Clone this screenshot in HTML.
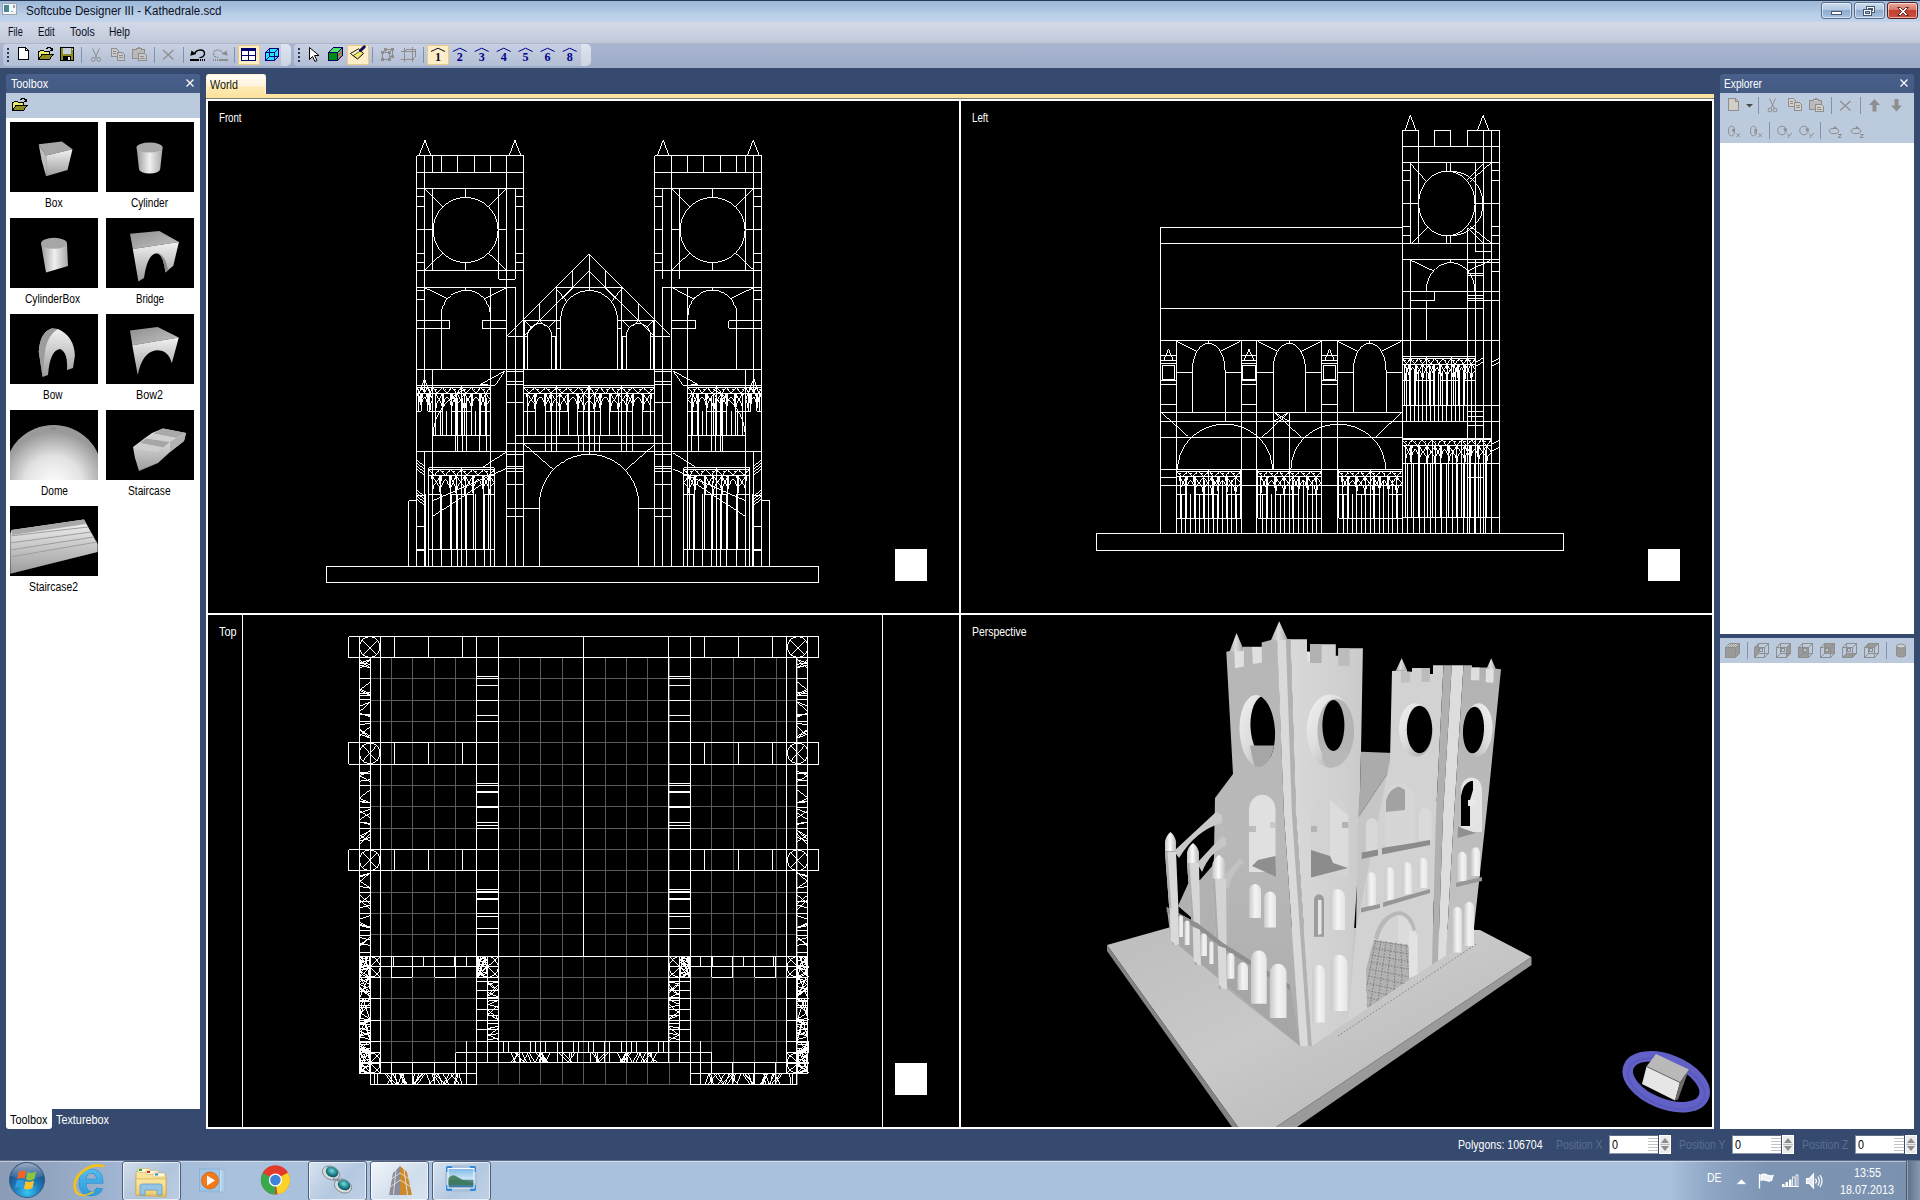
<!DOCTYPE html>
<html><head><meta charset="utf-8"><title>Softcube Designer III</title>
<style>
*{box-sizing:border-box;margin:0;padding:0}
html,body{width:1920px;height:1200px;overflow:hidden;background:#354a6e;font-family:"Liberation Sans",sans-serif;font-size:12px;color:#000}
.abs{position:absolute}
svg{position:absolute;overflow:visible}
.t{position:absolute;white-space:nowrap;line-height:14px;letter-spacing:-0.45px}
</style></head>
<body>
<div class="abs" style="left:0px;top:0px;width:1920px;height:22px;background:linear-gradient(#263752 0,#263752 1px,#9db8d8 1px,#a9c2df 8px,#b9cee7 14px,#c2d4ea 22px)"></div>
<div class="abs" style="left:0px;top:22px;width:1920px;height:21px;background:linear-gradient(#d3d9e7,#c9d0df 60%,#c0c8d8)"></div>
<div class="abs" style="left:0px;top:43px;width:1920px;height:25px;background:linear-gradient(#aab6d0,#9dabc7)"></div>
<div class="t" style="left:26px;top:4px;letter-spacing:0;font-size:12px;line-height:14px;transform-origin:0 0;transform:scaleX(0.9641);color:#0a0f1e">Softcube Designer III - Kathedrale.scd</div>
<div class="t" style="left:7.5px;top:25px;letter-spacing:0;font-size:12px;line-height:14px;transform-origin:0 0;transform:scaleX(0.7602);color:#0a0f1e">File</div>
<div class="t" style="left:37.5px;top:25px;letter-spacing:0;font-size:12px;line-height:14px;transform-origin:0 0;transform:scaleX(0.8076);color:#0a0f1e">Edit</div>
<div class="t" style="left:69.5px;top:25px;letter-spacing:0;font-size:12px;line-height:14px;transform-origin:0 0;transform:scaleX(0.8817);color:#0a0f1e">Tools</div>
<div class="t" style="left:109.2px;top:25px;letter-spacing:0;font-size:12px;line-height:14px;transform-origin:0 0;transform:scaleX(0.8509);color:#0a0f1e">Help</div>
<div class="abs" style="left:1821px;top:2px;width:31px;height:17px;background:linear-gradient(#c9dbee 0,#b3c9e2 45%,#8fabcc 50%,#a9c3df 100%);border:1px solid #566d8e;border-radius:3px;box-shadow:inset 0 0 0 1px rgba(255,255,255,.55)"></div>
<div class="abs" style="left:1854px;top:2px;width:31px;height:17px;background:linear-gradient(#c9dbee 0,#b3c9e2 45%,#8fabcc 50%,#a9c3df 100%);border:1px solid #566d8e;border-radius:3px;box-shadow:inset 0 0 0 1px rgba(255,255,255,.55)"></div>
<div class="abs" style="left:1887px;top:2px;width:31px;height:17px;background:linear-gradient(#e8a99a 0,#d9776a 45%,#c3402f 50%,#c8523d 100%);border:1px solid #5a1f1a;border-radius:3px;box-shadow:inset 0 0 0 1px rgba(255,255,255,.55)"></div>
<svg style="left:1821px;top:2px" width="100" height="17" viewBox="0 0 100 17">
<rect x="10.5" y="9.5" width="10" height="3" fill="#fff" stroke="#45566f" stroke-width="1"/>
<g fill="none" stroke="#45566f" stroke-width="1"><rect x="45.5" y="4.500" width="8" height="6" fill="#fff"/><rect x="47.5" y="6.5" width="4" height="2" fill="#9db6d3"/>
<rect x="42.500" y="7.500" width="8" height="6" fill="#fff"/><rect x="44.5" y="9.5" width="4" height="2" fill="#9db6d3"/></g>
<path d="M76.5 5.500 l3 0 l2.500 2.600 l2.500 -2.600 l3 0 l-4 4 l4 4 l-3 0 l-2.500 -2.600 l-2.500 2.600 l-3 0 l4 -4 z" fill="#fff" stroke="#5a2a25" stroke-width="1"/>
</svg>
<svg style="left:2px;top:3px" width="16" height="13" viewBox="0 0 16 13"><rect x="0.5" y="0.5" width="14" height="11" fill="#f4f6f8" stroke="#9aa4ad"/><rect x="2" y="2" width="5" height="7" fill="#3f8f86"/><rect x="2" y="2" width="2" height="7" fill="#4a7fa8"/><rect x="11.500" y="2" width="1" height="3" fill="#34506b"/><rect x="9" y="8" width="2" height="1" fill="#9aa"/></svg>
<div class="abs" style="left:3px;top:44px;width:288px;height:22px;background:linear-gradient(#c9d1e3,#bac5da 60%,#b3bfd6);border-radius:4px 5px 5px 4px;"></div>
<div class="abs" style="left:281px;top:44px;width:10px;height:22px;background:linear-gradient(#dfe4ef,#ccd4e4);border-radius:0 5px 5px 0"></div>
<div class="abs" style="left:7px;top:48px;width:2px;height:2px;background:#27375a"></div>
<div class="abs" style="left:7px;top:52px;width:2px;height:2px;background:#27375a"></div>
<div class="abs" style="left:7px;top:56px;width:2px;height:2px;background:#27375a"></div>
<div class="abs" style="left:7px;top:60px;width:2px;height:2px;background:#27375a"></div>
<div class="abs" style="left:294px;top:44px;width:297px;height:22px;background:linear-gradient(#c9d1e3,#bac5da 60%,#b3bfd6);border-radius:4px 5px 5px 4px;"></div>
<div class="abs" style="left:581px;top:44px;width:10px;height:22px;background:linear-gradient(#dfe4ef,#ccd4e4);border-radius:0 5px 5px 0"></div>
<div class="abs" style="left:298px;top:48px;width:2px;height:2px;background:#27375a"></div>
<div class="abs" style="left:298px;top:52px;width:2px;height:2px;background:#27375a"></div>
<div class="abs" style="left:298px;top:56px;width:2px;height:2px;background:#27375a"></div>
<div class="abs" style="left:298px;top:60px;width:2px;height:2px;background:#27375a"></div>
<div class="abs" style="left:81px;top:47px;width:1px;height:16px;background:#8391ad"></div>
<div class="abs" style="left:154px;top:47px;width:1px;height:16px;background:#8391ad"></div>
<div class="abs" style="left:183px;top:47px;width:1px;height:16px;background:#8391ad"></div>
<div class="abs" style="left:234px;top:47px;width:1px;height:16px;background:#8391ad"></div>
<div class="abs" style="left:372px;top:47px;width:1px;height:16px;background:#8391ad"></div>
<div class="abs" style="left:423px;top:47px;width:1px;height:16px;background:#8391ad"></div>
<div class="abs" style="left:238px;top:45px;width:22px;height:20px;background:#fdeec7;border:1px solid #e9c98a"></div>
<div class="abs" style="left:347px;top:45px;width:22px;height:20px;background:#fdeec7;border:1px solid #e9c98a"></div>
<div class="abs" style="left:427px;top:45px;width:22px;height:20px;background:#fdeec7;border:1px solid #e9c98a"></div>
<svg style="left:0;top:0" width="600" height="70" viewBox="0 0 600 70" shape-rendering="crispEdges"><path d="M18.500 47.500 h7 l3 3 v9 h-10 z" fill="#fff" stroke="#000"/><path d="M25.500 47.500 v3 h3" fill="none" stroke="#000"/><g transform="translate(38,47)"><path d="M0.500 12.500 v-8 h1 l1 -1 h3 l1 1 h5 v2" fill="#e8e86a" stroke="#000"/><path d="M0.500 12.500 l3.500 -5 h11 l-3.500 5 z" fill="#8e8c1e" stroke="#000"/><path d="M8.500 1.500 q3.500 -2.500 6 1.500" fill="none" stroke="#000"/><path d="M15 0.500 v3.500 h-3.500 z" fill="#000"/></g><g transform="translate(60,47)"><rect x="0.500" y="0.500" width="13" height="13" fill="#8e8c1e" stroke="#000"/><rect x="3" y="1" width="8" height="6" fill="#c5cde0"/><rect x="3" y="9" width="8" height="4" fill="#000"/><rect x="8" y="10" width="2" height="3" fill="#e8e8f0"/><rect x="12" y="2" width="1" height="1" fill="#fff"/></g><g fill="none" stroke="#8e8e8e" shape-rendering="auto"><path d="M92.500 48.500 l4.500 9.500 M99.500 48.500 l-4.500 9.500"/><circle cx="93.300" cy="59.500" r="1.900"/><circle cx="98.700" cy="59.500" r="1.900"/></g><g transform="translate(111,48)" stroke="#8e8e8e" fill="#c8c8c8"><path d="M0.500 0.500 h5 l2 2 v6 h-7 z"/><path d="M6.500 4.500 h5 l2 2 v6 h-7 z"/><path d="M2 3.500 h3 M2 5.500 h3 M8 7.500 h4 M8 9.500 h4" fill="none"/></g><g transform="translate(132,47)" stroke="#8e8e8e"><rect x="0.500" y="2.500" width="12" height="9" fill="#b9b9b9"/><path d="M4 2.500 v-1.500 h2 v-1 h1 v1 h2 v1.500" fill="#c8c8c8"/><path d="M6.500 6.500 h6 l2 2 v5 h-8 z" fill="#c8c8c8"/><path d="M8 9.500 h4 M8 11.500 h5" fill="none"/></g><path d="M163 50 l10.500 9.500 M173.500 50 l-10.500 9.500" stroke="#8e8e8e" stroke-width="1.300" fill="none" shape-rendering="auto"/><g shape-rendering="auto"><path d="M194.500 54 C196.500 49.200 203.800 48.600 204.500 53 C204.800 56.200 202 57.600 199.500 57.600" fill="none" stroke="#000" stroke-width="1.400"/><path d="M190.300 55.800 l1.200 -5.300 l4.800 3.600 z" fill="#000"/></g><rect x="190" y="59" width="9" height="2" fill="#000"/><rect x="200" y="59" width="1" height="2" fill="#000"/><rect x="202" y="59" width="1" height="2" fill="#000"/><rect x="204" y="59" width="1" height="2" fill="#000"/><g shape-rendering="auto"><path d="M223.500 54 C221.500 49.200 214.200 48.600 213.500 53 C213.200 56.200 216 57.600 218.500 57.600" fill="none" stroke="#8e8e8e" stroke-width="1.300" stroke-dasharray="2.200 1"/><path d="M227.700 55.800 l-1.200 -5.300 l-4.800 3.600 z" fill="#8e8e8e"/></g><rect x="219" y="59" width="9" height="2" fill="#8e8e8e"/><rect x="213" y="59" width="1" height="2" fill="#8e8e8e"/><rect x="215" y="59" width="1" height="2" fill="#8e8e8e"/><rect x="217" y="59" width="1" height="2" fill="#8e8e8e"/><g><rect x="241.500" y="48.500" width="14" height="12" fill="#fff" stroke="#00006a"/><rect x="242" y="49" width="14" height="2" fill="#00006a"/><path d="M248.500 51 v10 M242 55.500 h14" stroke="#00006a" fill="none"/></g><g stroke="#00008a" fill="#29e4f4"><path d="M265.500 52.500 l4 -4 h9 v8 l-4 4 h-9 z"/><path d="M265.500 52.500 h9 v8 M274.500 52.500 l4 -4" fill="none"/><path d="M269.500 48.500 v8 h9 M269.500 56.500 l-4 4" fill="none"/></g></svg>
<svg style="left:0;top:0" width="600" height="70" viewBox="0 0 600 70" shape-rendering="crispEdges"><path d="M309.500 47.500 v12 l3 -3 l2.500 5 l2 -1 l-2.500 -5 h4.500 z" fill="#fff" stroke="#000" shape-rendering="auto"/><g stroke="#00005a"><path d="M328.500 52.500 l5 -5 h9 l-5 5 z" fill="#52e070"/><path d="M337.500 52.500 l5 -5 v8 l-5 5 z" fill="#d0b088"/><rect x="328.500" y="52.500" width="9" height="8" fill="#008a14"/></g><path d="M338 54.500 l4 -4 M338 56.500 l4 -4 M338 58.500 l4 -4" stroke="#e05050" fill="none"/><path d="M338 53.500 l4 -4 M338 57.500 l4 -4" stroke="#40c060" fill="none"/><g shape-rendering="auto"><path d="M350.500 53.500 l8 -4.500 l5 4.500 l-6 5.500 z" fill="#f2ea6e" stroke="#000"/><path d="M350.500 53.500 l8 -4.500 l2 1.800 l-7.500 4.800z" fill="#fff8c0" stroke="#000" stroke-width=".6"/><path d="M360.500 50.500 l3.800 -3.600" stroke="#101060" stroke-width="3" stroke-linecap="round"/></g><g stroke="#8e8e8e" fill="none"><rect x="382.500" y="52.500" width="7" height="7"/><path d="M385.500 52.500 v-3 h7 v7 h-3"/></g><g fill="#8e8e8e"><rect x="381" y="51" width="3" height="3"/><rect x="388" y="51" width="3" height="3"/><rect x="381" y="58" width="3" height="3"/><rect x="388" y="58" width="3" height="3"/><rect x="384" y="48" width="3" height="3"/><rect x="391" y="48" width="3" height="3"/><rect x="391" y="55" width="3" height="3"/></g><g stroke="#8e8e8e" fill="none"><path d="M401 51.500 h15 M401 59.500 h13 M404.500 48 v14 M412.500 47 v15 M406.500 49.500 h9 v7 M404.500 51.500 l2 -2 M412.500 59.500 l3 -3"/></g><path d="M431 51.5 l7 -3.300 l7 3.300" stroke="#0a0a30" fill="none" stroke-width="1" shape-rendering="auto"/><text x="438" y="60.800" font-family="Liberation Serif,serif" font-weight="bold" font-size="12" text-anchor="middle" fill="#0a0a30">1</text><path d="M452.8 51.5 l7 -3.300 l7 3.300" stroke="#00008a" fill="none" stroke-width="1" shape-rendering="auto"/><text x="459.8" y="60.800" font-family="Liberation Serif,serif" font-weight="bold" font-size="12" text-anchor="middle" fill="#00008a">2</text><path d="M474.7 51.5 l7 -3.300 l7 3.300" stroke="#00008a" fill="none" stroke-width="1" shape-rendering="auto"/><text x="481.7" y="60.800" font-family="Liberation Serif,serif" font-weight="bold" font-size="12" text-anchor="middle" fill="#00008a">3</text><path d="M496.7 51.5 l7 -3.300 l7 3.300" stroke="#00008a" fill="none" stroke-width="1" shape-rendering="auto"/><text x="503.7" y="60.800" font-family="Liberation Serif,serif" font-weight="bold" font-size="12" text-anchor="middle" fill="#00008a">4</text><path d="M518.6 51.5 l7 -3.300 l7 3.300" stroke="#00008a" fill="none" stroke-width="1" shape-rendering="auto"/><text x="525.6" y="60.800" font-family="Liberation Serif,serif" font-weight="bold" font-size="12" text-anchor="middle" fill="#00008a">5</text><path d="M540.6 51.5 l7 -3.300 l7 3.300" stroke="#00008a" fill="none" stroke-width="1" shape-rendering="auto"/><text x="547.6" y="60.800" font-family="Liberation Serif,serif" font-weight="bold" font-size="12" text-anchor="middle" fill="#00008a">6</text><path d="M562.7 51.5 l7 -3.300 l7 3.300" stroke="#00008a" fill="none" stroke-width="1" shape-rendering="auto"/><text x="569.7" y="60.800" font-family="Liberation Serif,serif" font-weight="bold" font-size="12" text-anchor="middle" fill="#00008a">8</text></svg>
<div class="abs" style="left:6px;top:74px;width:194px;height:19px;background:linear-gradient(#48608a,#435a83);border-radius:3px 3px 0 0"></div>
<div class="t" style="left:11px;top:77px;letter-spacing:0;font-size:12px;line-height:14px;transform-origin:0 0;transform:scaleX(0.8946);color:#fff">Toolbox</div>
<div class="abs" style="left:6px;top:93px;width:194px;height:25px;background:#bccade"></div>
<div class="abs" style="left:6px;top:118px;width:194px;height:991px;background:#fff"></div>
<svg style="left:0;top:0" width="210" height="130" viewBox="0 0 210 130"><path d="M186.500 79.500 l7 7 M193.500 79.500 l-7 7" stroke="#fff" stroke-width="1.200" fill="none"/><g shape-rendering="crispEdges"><g transform="translate(12,98)"><path d="M0.500 12.500 v-8 h1 l1 -1 h3 l1 1 h5 v2" fill="#e8e86a" stroke="#000"/><path d="M0.500 12.500 l3.500 -5 h11 l-3.500 5 z" fill="#8e8c1e" stroke="#000"/><path d="M8.500 1.500 q3.500 -2.500 6 1.500" fill="none" stroke="#000"/><path d="M15 0.500 v3.500 h-3.500 z" fill="#000"/></g></g></svg>
<div class="abs" style="left:6px;top:1109px;width:46px;height:20px;background:#fff;border-radius:0 0 3px 3px"></div>
<div class="t" style="left:10px;top:1113px;letter-spacing:0;font-size:12px;line-height:14px;transform-origin:0 0;transform:scaleX(0.9066);color:#000">Toolbox</div>
<div class="t" style="left:56px;top:1113px;letter-spacing:0;font-size:12px;line-height:14px;transform-origin:0 0;transform:scaleX(0.9029);color:#fff">Texturebox</div>
<div class="abs" style="left:206px;top:74px;width:60px;height:24px;background:linear-gradient(#fffdf6 0,#fff4dc 46%,#fde9b0 54%,#fce3a0 100%);border-radius:3px 3px 0 0;border:1px solid #fdf0cc;border-bottom:none"></div>
<div class="abs" style="left:206px;top:94px;width:1508px;height:4px;background:#fce3a0"></div>
<div class="abs" style="left:206px;top:98px;width:1508px;height:1px;background:#7a7d70"></div>
<div class="t" style="left:210px;top:78px;letter-spacing:0;font-size:12px;line-height:14px;transform-origin:0 0;transform:scaleX(0.8998);color:#1a1400">World</div>
<div class="abs" style="left:206px;top:99px;width:1508px;height:1030px;background:#000;border:2px solid #fff"></div>
<div class="abs" style="left:959px;top:99px;width:2px;height:1030px;background:#fff"></div>
<div class="abs" style="left:206px;top:613px;width:1508px;height:2px;background:#fff"></div>
<div class="abs" style="left:1720px;top:74px;width:194px;height:19px;background:linear-gradient(#48608a,#435a83);border-radius:3px 3px 0 0"></div>
<div class="t" style="left:1724px;top:77px;letter-spacing:0;font-size:12px;line-height:14px;transform-origin:0 0;transform:scaleX(0.8504);color:#fff">Explorer</div>
<div class="abs" style="left:1720px;top:93px;width:194px;height:50px;background:#bccade"></div>
<div class="abs" style="left:1720px;top:143px;width:194px;height:491px;background:#fff"></div>
<div class="abs" style="left:1720px;top:638px;width:194px;height:25px;background:#bccade"></div>
<div class="abs" style="left:1720px;top:663px;width:194px;height:466px;background:#fff"></div>
<div class="t" style="left:1457.5px;top:1138px;letter-spacing:0;font-size:12px;line-height:14px;transform-origin:0 0;transform:scaleX(0.8795);color:#fff">Polygons: 106704</div>
<div class="t" style="left:1555.5px;top:1138px;letter-spacing:0;font-size:12px;line-height:14px;transform-origin:0 0;transform:scaleX(0.8606);color:#5b6f91">Position X</div>
<div class="abs" style="left:1609px;top:1135px;width:49px;height:19px;background:#fff;border:1px solid #8b97ab;border-top-color:#5f6b80"></div>
<div class="t" style="left:1612px;top:1138px;letter-spacing:0;font-size:12px;line-height:14px;transform-origin:0 0;transform:scaleX(0.8990);color:#000">0</div>
<div class="abs" style="left:1648px;top:1136px;width:10px;height:17px;background:repeating-linear-gradient(#fff 0,#fff 2px,#c4c4c4 2px,#c4c4c4 3px)"></div>
<div class="abs" style="left:1659px;top:1135px;width:12px;height:19px;background:#ececec;border:1px solid #fff"></div>
<svg style="left:1659px;top:1135px" width="12" height="19"><path d="M2 8 l4 -5 l4 5 z M2 11 l4 5 l4 -5 z" fill="#8d8d8d"/><path d="M1 9.500 h10" stroke="#bbb"/></svg>
<div class="t" style="left:1678.5px;top:1138px;letter-spacing:0;font-size:12px;line-height:14px;transform-origin:0 0;transform:scaleX(0.8641);color:#5b6f91">Position Y</div>
<div class="abs" style="left:1732px;top:1135px;width:49px;height:19px;background:#fff;border:1px solid #8b97ab;border-top-color:#5f6b80"></div>
<div class="t" style="left:1735px;top:1138px;letter-spacing:0;font-size:12px;line-height:14px;transform-origin:0 0;transform:scaleX(0.8990);color:#000">0</div>
<div class="abs" style="left:1771px;top:1136px;width:10px;height:17px;background:repeating-linear-gradient(#fff 0,#fff 2px,#c4c4c4 2px,#c4c4c4 3px)"></div>
<div class="abs" style="left:1782px;top:1135px;width:12px;height:19px;background:#ececec;border:1px solid #fff"></div>
<svg style="left:1782px;top:1135px" width="12" height="19"><path d="M2 8 l4 -5 l4 5 z M2 11 l4 5 l4 -5 z" fill="#8d8d8d"/><path d="M1 9.500 h10" stroke="#bbb"/></svg>
<div class="t" style="left:1801.5px;top:1138px;letter-spacing:0;font-size:12px;line-height:14px;transform-origin:0 0;transform:scaleX(0.8715);color:#5b6f91">Position Z</div>
<div class="abs" style="left:1855px;top:1135px;width:49px;height:19px;background:#fff;border:1px solid #8b97ab;border-top-color:#5f6b80"></div>
<div class="t" style="left:1858px;top:1138px;letter-spacing:0;font-size:12px;line-height:14px;transform-origin:0 0;transform:scaleX(0.8990);color:#000">0</div>
<div class="abs" style="left:1894px;top:1136px;width:10px;height:17px;background:repeating-linear-gradient(#fff 0,#fff 2px,#c4c4c4 2px,#c4c4c4 3px)"></div>
<div class="abs" style="left:1905px;top:1135px;width:12px;height:19px;background:#ececec;border:1px solid #fff"></div>
<svg style="left:1905px;top:1135px" width="12" height="19"><path d="M2 8 l4 -5 l4 5 z M2 11 l4 5 l4 -5 z" fill="#8d8d8d"/><path d="M1 9.500 h10" stroke="#bbb"/></svg>
<div class="abs" style="left:0px;top:1160px;width:1920px;height:40px;background:linear-gradient(90deg,#8b9bb6 0,#93a6c2 3%,#a3b9d5 7%,#a9c1dd 12%,#a9c1dd 87%,#8fa6c4 89%,#7d94b3 92%,#7a91b0 100%)"></div>
<div class="abs" style="left:0px;top:1160px;width:1920px;height:1px;background:#5d6f8c"></div>
<div class="abs" style="left:0px;top:1161px;width:1920px;height:1px;background:rgba(255,255,255,.45)"></div>
<div class="abs" style="left:122px;top:1161px;width:59px;height:40px;background:linear-gradient(135deg,rgba(255,255,255,.55),rgba(255,255,255,.12) 55%,rgba(255,255,255,.25));border:1px solid #4d5f7c;border-radius:3px;box-shadow:inset 0 0 0 1px rgba(255,255,255,.65)"></div>
<div class="abs" style="left:308px;top:1161px;width:59px;height:40px;background:linear-gradient(135deg,rgba(255,255,255,.55),rgba(255,255,255,.12) 55%,rgba(255,255,255,.25));border:1px solid #4d5f7c;border-radius:3px;box-shadow:inset 0 0 0 1px rgba(255,255,255,.65)"></div>
<div class="abs" style="left:370px;top:1161px;width:59px;height:40px;background:linear-gradient(135deg,rgba(255,255,255,.85),rgba(255,255,255,.45) 60%,rgba(255,255,255,.55));border:1px solid #4d5f7c;border-radius:3px;box-shadow:inset 0 0 0 1px rgba(255,255,255,.65)"></div>
<div class="abs" style="left:432px;top:1161px;width:59px;height:40px;background:linear-gradient(135deg,rgba(255,255,255,.55),rgba(255,255,255,.12) 55%,rgba(255,255,255,.25));border:1px solid #4d5f7c;border-radius:3px;box-shadow:inset 0 0 0 1px rgba(255,255,255,.65)"></div>
<div class="abs" style="left:1906px;top:1161px;width:14px;height:39px;background:linear-gradient(90deg,#5e7088,#6e8098 40%,#8799b2);border-left:1px solid #4a5a72;box-shadow:inset 1px 0 0 rgba(255,255,255,.35)"></div>
<div class="t" style="left:1706.5px;top:1171px;letter-spacing:0;font-size:12px;line-height:14px;transform-origin:0 0;transform:scaleX(0.8698);color:#fff">DE</div>
<div class="t" style="left:1853.5px;top:1166px;letter-spacing:0;font-size:12px;line-height:14px;transform-origin:0 0;transform:scaleX(0.8991);color:#fff">13:55</div>
<div class="t" style="left:1840px;top:1183px;letter-spacing:0;font-size:12px;line-height:14px;transform-origin:0 0;transform:scaleX(0.8991);color:#fff">18.07.2013</div>
<svg style="left:0;top:0" width="1920" height="1200" viewBox="0 0 1920 1200"><defs>
<radialGradient id="orb" cx="50%" cy="85%" r="85%"><stop offset="0" stop-color="#35c6f2"/><stop offset=".45" stop-color="#1d78b8"/><stop offset=".8" stop-color="#1b4f86"/><stop offset="1" stop-color="#27466f"/></radialGradient>
<linearGradient id="orbhi" x1="0" y1="0" x2="0" y2="1"><stop offset="0" stop-color="#fff" stop-opacity=".55"/><stop offset="1" stop-color="#fff" stop-opacity=".05"/></linearGradient>
<linearGradient id="ieg" x1="0" y1="0" x2="0" y2="1"><stop offset="0" stop-color="#6fd0f6"/><stop offset="1" stop-color="#1b8fd6"/></linearGradient>
<linearGradient id="fold" x1="0" y1="0" x2="0" y2="1"><stop offset="0" stop-color="#fbe8a6"/><stop offset="1" stop-color="#efce6e"/></linearGradient>
<linearGradient id="sky" x1="0" y1="0" x2="0" y2="1"><stop offset="0" stop-color="#7db8e8"/><stop offset=".55" stop-color="#cfe6f4"/><stop offset=".6" stop-color="#4f8d86"/><stop offset="1" stop-color="#3c79a8"/></linearGradient>
<radialGradient id="eye" cx="45%" cy="40%" r="60%"><stop offset="0" stop-color="#7fd8d8"/><stop offset=".6" stop-color="#1f8a92"/><stop offset="1" stop-color="#0c4a58"/></radialGradient>
</defs><circle cx="27" cy="1180" r="17.500" fill="url(#orb)" stroke="#3a5a84" stroke-width="1"/><path d="M10.500 1176 a17 17 0 0 1 33 0 q-16 6 -33 0z" fill="url(#orbhi)"/><g transform="translate(27,1180)"><path d="M-8.500 -8 q4 -2.500 7.500 -.5 l-1.500 7.500 q-3.500 -2 -7.500 .5z" fill="#f0642a"/><path d="M0.500 -8 q4 2 8.500 -.5 l-1.500 7.500 q-4.500 2.500 -8.500 .5z" fill="#8cc43c"/><path d="M-10.500 1 q4 -2.500 7.500 -.5 l-1.500 7.500 q-3.500 -2 -7.500 .5z" fill="#2f9de0"/><path d="M-1.500 1 q4 2 8.500 -.5 l-1.500 7.500 q-4.500 2.500 -8.500 .5z" fill="#fdc22a"/></g><g transform="translate(90,1181)"><text x="-13" y="14.500" font-family="Liberation Sans,sans-serif" font-weight="bold" font-size="50" fill="url(#ieg)" stroke="#2a86cc" stroke-width=".5">e</text><path d="M-13 12 C-22 0 -4 -19 13 -15" fill="none" stroke="#f2c21c" stroke-width="2.800" stroke-linecap="round"/><path d="M-13 12 C-9 16 -2 14 3 11" fill="none" stroke="#f2c21c" stroke-width="2" stroke-linecap="round" opacity=".9"/></g><g transform="translate(135,1167)"><path d="M1 28 v-22 q0 -2 2 -2 h11 q2 0 2 2 v1 h13 q2 0 2 2 v21z" fill="url(#fold)" stroke="#c9a648" stroke-width=".8"/><rect x="3" y="1.500" width="12" height="4" rx="1" fill="#fff8dc" stroke="#c9a648" stroke-width=".5"/><rect x="4" y="2" width="3" height="2" fill="#20a838"/><rect x="11" y="3.500" width="12" height="4" rx="1" fill="#fff8dc" stroke="#c9a648" stroke-width=".5"/><rect x="12" y="4" width="3" height="2" fill="#d03020"/><rect x="18" y="6" width="12" height="4" rx="1" fill="#fff8dc" stroke="#c9a648" stroke-width=".5"/><rect x="20" y="6.500" width="3" height="2" fill="#2a8ad8"/><path d="M1 12 h30 v16 h-30z" fill="url(#fold)" stroke="#c9a648" stroke-width=".6"/><path d="M5 28 v-9 q0 -2 2 -2 h18 q2 0 2 2 v9 h-5 v-5 h-12 v5z" fill="#8fc4ea" stroke="#5a9ad0" stroke-width=".8" opacity=".95"/></g><g transform="translate(199,1169)"><rect x="4" y="1" width="21" height="22" fill="#b9d6ee" stroke="#8fb4d6" stroke-width=".6"/><rect x="2" y="0.500" width="21" height="22" fill="#c9e0f2" stroke="#8fb4d6" stroke-width=".6"/><rect x="0.500" y="0" width="20" height="22" fill="#9fc6e6" stroke="#7aa6cc" stroke-width=".6"/><circle cx="11" cy="11.500" r="8.500" fill="#f07a1c" stroke="#d8600c" stroke-width=".8"/><path d="M8 6.500 l8 5 l-8 5z" fill="#fff"/></g><g transform="translate(275.400,1180)"><circle r="14.500" fill="#e23a2c"/><path d="M0 0 L-12.560 -7.250 A14.500 14.500 0 0 0 0 14.500 Z" fill="#3aa94c"/><path d="M0 0 L0 14.500 A14.500 14.500 0 0 0 12.560 -7.250 Z" fill="#fbd229" transform="rotate(-8)"/><path d="M-12.560 -7.250 A14.500 14.500 0 0 1 12.560 -7.250 L0 -1z" fill="#e23a2c"/><circle r="6.600" fill="#fff"/><circle r="5.300" fill="#3f82d8"/></g><g transform="translate(337,1180)"><ellipse cx="-6" cy="-7" rx="9" ry="6.500" transform="rotate(25 -6 -7)" fill="#d8dcdc" stroke="#7a8088" stroke-width=".8"/><ellipse cx="-5" cy="-8" rx="6.500" ry="5" transform="rotate(25 -5 -8)" fill="url(#eye)"/><ellipse cx="6" cy="6" rx="9" ry="6.500" transform="rotate(25 6 6)" fill="#d8dcdc" stroke="#7a8088" stroke-width=".8"/><ellipse cx="7" cy="5" rx="6.500" ry="5" transform="rotate(25 7 5)" fill="url(#eye)"/><path d="M-4 -1 l8 2" stroke="#8a9098" stroke-width="2"/></g><g transform="translate(400,1180)"><path d="M0 -14 l-7 7 l-4 22 h11z" fill="#8a8c9c"/><path d="M0 -14 l7 6 l5 23 h-12z" fill="#c98a2c"/><path d="M-8.500 -1 l8.500 -6 l9.500 6 M-10 7 l10 -7 l11 7 M-4 -10.500 l-2.500 25 M4 -10.500 l3.500 25.500" stroke="#e6e0d4" stroke-width=".9" fill="none"/></g><g transform="translate(446,1166)"><rect x="0" y="0" width="30" height="25" rx="1.500" fill="#2f8ad8"/><rect x="6" y="-1" width="18" height="27" fill="#a9c1dd"/><rect x="-1" y="6" width="32" height="13" fill="#a9c1dd"/><rect x="2" y="2.500" width="26" height="19.500" fill="url(#sky)" stroke="#fff" stroke-width="1"/><path d="M2.500 12 q4 -5 9 -1 q5 3 8 4 l8 2 v2 h-25z" fill="#3e7a5a" opacity=".9"/></g><path d="M1737 1184 l4.500 -4.500 l4.500 4.500z" fill="#fff" stroke="#d0d8e4" stroke-width=".5"/><g stroke="#fff" fill="none" stroke-width="1.300"><path d="M1759.500 1174 v14.500"/><path d="M1761 1175 q3 -1.500 6 0 t6 .5 l-1.500 5 q-3 1 -5 0 t-5.500 -.5z" fill="#fff" fill-opacity=".85"/></g><g fill="#fff"><rect x="1782" y="1184" width="2.500" height="2.500"/><rect x="1785.500" y="1182" width="2.500" height="4.500"/><rect x="1789" y="1179.500" width="2.500" height="7"/><rect x="1792.500" y="1177" width="2.500" height="9.500" fill="none" stroke="#fff" stroke-width=".8"/><rect x="1796" y="1175" width="2" height="11.500" fill="none" stroke="#fff" stroke-width=".8"/><rect x="1782" y="1186" width="16.500" height="1"/></g><g stroke="#fff" fill="none" stroke-width="1.200"><path d="M1806.500 1178.500 h3 l4 -4.500 v14 l-4 -4.500 h-3z" fill="#fff" fill-opacity=".8"/><path d="M1815.500 1178.500 q1.800 2.500 0 5 M1817.800 1176.500 q3 4.500 0 9 M1820 1175 q4 6 0 12"/></g></svg>
<svg style="left:0;top:0" width="210" height="600" viewBox="0 0 210 600"><defs>
<linearGradient id="tg1" x1="0" y1="0" x2="1" y2="0"><stop offset="0" stop-color="#9a9a9a"/><stop offset=".5" stop-color="#f0f0f0"/><stop offset="1" stop-color="#a8a8a8"/></linearGradient>
<linearGradient id="tg2" x1="0" y1="0" x2="0" y2="1"><stop offset="0" stop-color="#f2f2f2"/><stop offset="1" stop-color="#9c9c9c"/></linearGradient>
<linearGradient id="tg3" x1="0" y1="0" x2="1" y2="1"><stop offset="0" stop-color="#8e8e8e"/><stop offset="1" stop-color="#c4c4c4"/></linearGradient>
<radialGradient id="dome" cx="50%" cy="62%" r="55%"><stop offset="0" stop-color="#ffffff"/><stop offset=".55" stop-color="#e2e2e2"/><stop offset="1" stop-color="#9a9a9a"/></radialGradient>
<clipPath id="c7"><rect x="10" y="410" width="88" height="70"/></clipPath>
<clipPath id="c9"><rect x="10" y="506" width="88" height="70"/></clipPath>
</defs><rect x="10" y="122" width="88" height="70" fill="#000"/><rect x="106" y="122" width="88" height="70" fill="#000"/><rect x="10" y="218" width="88" height="70" fill="#000"/><rect x="106" y="218" width="88" height="70" fill="#000"/><rect x="10" y="314" width="88" height="70" fill="#000"/><rect x="106" y="314" width="88" height="70" fill="#000"/><rect x="10" y="410" width="88" height="70" fill="#000"/><rect x="106" y="410" width="88" height="70" fill="#000"/><rect x="10" y="506" width="88" height="70" fill="#000"/><polygon points="38.7,144.3 61.9,141.6 72.5,149.2 46.1,155.5" fill="#a6a6a6"/><polygon points="46.1,155.5 72.5,149.2 67.5,170.1 46.1,176.2" fill="url(#tg2)"/><polygon points="38.7,144.3 46.1,155.5 46.1,176.2 41.6,160.0" fill="#bdbdbd"/><path d="M136.600 147.600 L139 169 A10.600 4.500 0 0 0 160.200 169 L162.600 147.600Z" fill="url(#tg1)"/><ellipse cx="149.600" cy="147.600" rx="13" ry="5" fill="#a9a9a9"/><path d="M41 243.500 L46 272.500 L68 266 L67 243.500Z" fill="url(#tg1)"/><ellipse cx="54" cy="243.300" rx="13" ry="5.500" fill="#a6a6a6"/><polygon points="130.0,233.8 159.3,230.9 178.9,242.1 132.8,248.9" fill="url(#tg3)"/><path d="M132.800 248.900 L178.900 242.100 L173.300 265.800 L165.400 272.500 Q163 252 155.300 253.400 Q147 256 144 278 L138.400 281.500Z" fill="url(#tg2)"/><path d="M155.300 253.400 Q163 252 165.400 272.500 L168 270 Q166 256 158 253Z" fill="#8a8a8a"/><path d="M42.600 377 L38.750 351.700 Q40 332 51.700 328.400 L58 329 Q74 336 74.900 355.500 L73 368 L67 370 Q68 352 60 349 Q50 350 48 375Z" fill="url(#tg2)"/><path d="M38.750 351.700 Q40 332 51.700 328.400 L58 329 Q46 336 44.500 356 L42.600 377Z" fill="#9c9c9c"/><polygon points="130.0,330.5 157.6,327.1 178.8,337.5 132.3,345.2" fill="url(#tg3)"/><path d="M132.300 345.200 L178.800 337.500 L171.800 363.300 Q168 349 155 350.400 Q142 353 137.700 375Z" fill="url(#tg2)"/><g clip-path="url(#c7)"><circle cx="53.500" cy="474" r="49" fill="url(#dome)"/><ellipse cx="53.500" cy="428.500" rx="3.500" ry="1.200" fill="#8e8e8e"/></g><polygon points="133.0,447.0 145.0,438.0 152.0,433.0 163.0,428.5 186.0,433.0 184.0,441.0 170.0,452.0 158.0,463.0 139.0,471.0 135.0,458.0" fill="url(#tg2)"/><polygon points="163.0,428.5 186.0,433.0 176.0,438.0 153.0,433.5" fill="#a9a9a9"/><polygon points="153.0,433.5 176.0,438.0 170.0,442.0 146.0,438.5" fill="#d0d0d0"/><polygon points="146.0,438.5 170.0,442.0 163.0,447.5 140.0,443.0" fill="#a6a6a6"/><polygon points="140.0,443.0 163.0,447.5 157.0,452.0 134.0,448.0" fill="#cecece"/><polygon points="176.0,438.0 186.0,433.0 184.0,441.0 170.0,452.0 170.0,442.0" fill="#b2b2b2"/><g clip-path="url(#c9)"><polygon points="10.3,533.8 11.6,530.0 84.0,519.6 97.6,544.0 97.6,552.0 10.3,573.8" fill="url(#tg2)"/><polygon points="11.6,530.0 84.0,519.6 86.0,524.0 12.0,535.0" fill="#a8a8a8"/><path d="M10 536 L88 527" stroke="#9e9e9e" stroke-width="1.200"/><path d="M10 543 L91 532" stroke="#9e9e9e" stroke-width="1.200"/><path d="M10 550 L94 537" stroke="#9e9e9e" stroke-width="1.200"/><path d="M10 557 L97 542" stroke="#9e9e9e" stroke-width="1.200"/></g></svg>
<div class="t" style="left:45.05px;top:195.6px;letter-spacing:0;font-size:12px;line-height:14px;transform-origin:0 0;transform:scaleX(0.8463);color:#000">Box</div>
<div class="t" style="left:130.5px;top:195.6px;letter-spacing:0;font-size:12px;line-height:14px;transform-origin:0 0;transform:scaleX(0.8406);color:#000">Cylinder</div>
<div class="t" style="left:25.299999999999997px;top:291.6px;letter-spacing:0;font-size:12px;line-height:14px;transform-origin:0 0;transform:scaleX(0.8502);color:#000">CylinderBox</div>
<div class="t" style="left:135.7px;top:291.6px;letter-spacing:0;font-size:12px;line-height:14px;transform-origin:0 0;transform:scaleX(0.8072);color:#000">Bridge</div>
<div class="t" style="left:43.400000000000006px;top:387.6px;letter-spacing:0;font-size:12px;line-height:14px;transform-origin:0 0;transform:scaleX(0.8311);color:#000">Bow</div>
<div class="t" style="left:136.35000000000002px;top:387.6px;letter-spacing:0;font-size:12px;line-height:14px;transform-origin:0 0;transform:scaleX(0.8961);color:#000">Bow2</div>
<div class="t" style="left:40.6px;top:483.6px;letter-spacing:0;font-size:12px;line-height:14px;transform-origin:0 0;transform:scaleX(0.8435);color:#000">Dome</div>
<div class="t" style="left:128.39999999999998px;top:483.6px;letter-spacing:0;font-size:12px;line-height:14px;transform-origin:0 0;transform:scaleX(0.8516);color:#000">Staircase</div>
<div class="t" style="left:29.200000000000003px;top:579.6px;letter-spacing:0;font-size:12px;line-height:14px;transform-origin:0 0;transform:scaleX(0.8643);color:#000">Staircase2</div>
<svg style="left:0;top:0" width="1920" height="700" viewBox="0 0 1920 700" shape-rendering="crispEdges"><path d="M1907.500 79.500 l-7 7 M1900.500 79.500 l7 7" stroke="#fff" stroke-width="1.200" fill="none" shape-rendering="auto"/><path d="M1728.500 98.500 h7 l3 3 v9 h-10z" fill="#d2cfc6" stroke="#8e8e8e"/><path d="M1735.500 98.500 v3 h3" fill="none" stroke="#8e8e8e"/><path d="M1746 104 h7 l-3.500 3.500z" fill="#4a4a4a" shape-rendering="auto"/><g fill="none" stroke="#8e8e8e" shape-rendering="auto"><path d="M1769.500 98.500 l4.500 9.500 M1775.500 98.500 l-4.500 9.500"/><circle cx="1770" cy="110" r="1.900"/><circle cx="1775" cy="110" r="1.900"/></g><g transform="translate(1788,98)" stroke="#8e8e8e" fill="#d2cfc6"><path d="M0.500 0.500 h5 l2 2 v6 h-7 z"/><path d="M6.500 4.500 h5 l2 2 v6 h-7 z"/><path d="M2 3.500 h3 M2 5.500 h3 M8 7.500 h4 M8 9.500 h4" fill="none"/></g><g transform="translate(1809,98)" stroke="#8e8e8e"><rect x="0.500" y="2.500" width="12" height="9" fill="#b9b9b9"/><path d="M4 2.500 v-1.500 h2 v-1 h1 v1 h2 v1.500" fill="#d2cfc6"/><path d="M6.500 6.500 h6 l2 2 v5 h-8 z" fill="#d2cfc6"/><path d="M8 9.500 h4 M8 11.500 h5" fill="none"/></g><path d="M1840 101 l10.500 9.500 M1850.500 101 l-10.500 9.500" stroke="#8e8e8e" stroke-width="1.300" fill="none" shape-rendering="auto"/><path d="M1869 105 l5.500 -6 l5.500 6 h-3.500 v6.500 h-4 v-6.500z" fill="#8e8e8e" shape-rendering="auto"/><path d="M1891 105.500 l5.500 6 l5.500 -6 h-3.500 v-6.500 h-4 v6.500z" fill="#8e8e8e" shape-rendering="auto"/><rect x="1758" y="97" width="1" height="17" fill="#8391ad"/><rect x="1831" y="97" width="1" height="17" fill="#8391ad"/><rect x="1860" y="97" width="1" height="17" fill="#8391ad"/><rect x="1769" y="122" width="1" height="17" fill="#8391ad"/><rect x="1820" y="122" width="1" height="17" fill="#8391ad"/><g shape-rendering="auto" fill="none" stroke="#8e8e8e" stroke-width="1"><ellipse cx="1731.5" cy="131" rx="3" ry="4.800"/><path d="M1732 130 l3 0" /><path d="M1732.5 128.5 l3 2 l-3 2z" fill="#8e8e8e" stroke="none"/><path d="M1736.5 133.500 l3.500 3.500 M1740 133.500 l-3.500 3.500"/></g><g shape-rendering="auto" fill="none" stroke="#8e8e8e" stroke-width="1"><ellipse cx="1753.5" cy="131" rx="3" ry="4.800"/><path d="M1754 133 l3 0" /><path d="M1754.5 128.5 l3 2 l-3 2z" fill="#8e8e8e" stroke="none"/><path d="M1758.5 133.500 l3.500 3.500 M1762 133.500 l-3.500 3.500"/></g><g shape-rendering="auto" fill="none" stroke="#8e8e8e" stroke-width="1"><circle cx="1782" cy="130.500" r="4.300"/><path d="M1783.5 128 l4 1 l-3 3z" fill="#8e8e8e" stroke="none"/><path d="M1787 133.500 l2 2.500 M1792 133 l-4.500 5"/></g><g shape-rendering="auto" fill="none" stroke="#8e8e8e" stroke-width="1"><circle cx="1804" cy="130.500" r="4.300"/><path d="M1805.5 128 l4 1 l-3 3z" fill="#8e8e8e" stroke="none"/><path d="M1809 133.500 l2 2.500 M1814 133 l-4.500 5"/></g><g shape-rendering="auto" fill="none" stroke="#8e8e8e" stroke-width="1"><ellipse cx="1834" cy="131" rx="4.800" ry="2.600"/><path d="M1832.5 129 l2.500 -3 l2.500 3z" fill="#8e8e8e" stroke="none"/><path d="M1838 134.500 h3.500 l-3.500 3 h3.500"/></g><g shape-rendering="auto" fill="none" stroke="#8e8e8e" stroke-width="1"><ellipse cx="1856" cy="131" rx="4.800" ry="2.600"/><path d="M1854.5 129 l2.500 -3 l2.500 3z" fill="#8e8e8e" stroke="none"/><path d="M1860 134.500 h3.500 l-3.500 3 h3.500"/></g><g stroke="#8e8e8e" fill="none"><path d="M1725.5 647.5 l4 -4 h10 v10 l-4 4 h-10z" fill="#9a9a9a"/><path d="M1725.5 647.5 h10 v10 M1735.5 647.5 l4 -4"/><path d="M1727 646.5 h9 M1728 645.5 h9 M1729 644.5 h9" stroke="#d0d0d0" stroke-dasharray="1 1"/></g><g stroke="#8e8e8e" fill="none"><path d="M1754.5 647.5 l4 -4 v10 l-4 4z" fill="#9a9a9a" stroke="none"/><path d="M1754.5 647.5 h10 v10 h-10zM1758.5 643.5 h10 v10 h-10zM1754.5 647.5 l4 -4 M1764.5 647.5 l4 -4 M1754.5 657.5 l4 -4 M1764.5 657.5 l4 -4"/><rect x="1759.5" y="648.5" width="3" height="3" fill="#bccade"/></g><g stroke="#8e8e8e" fill="none"><path d="M1786.5 647.5 l4 -4 v10 l-4 4z" fill="#9a9a9a" stroke="none"/><path d="M1776.5 647.5 h10 v10 h-10zM1780.5 643.5 h10 v10 h-10zM1776.5 647.5 l4 -4 M1786.5 647.5 l4 -4 M1776.5 657.5 l4 -4 M1786.5 657.5 l4 -4"/><rect x="1781.5" y="648.5" width="3" height="3" fill="#bccade"/></g><g stroke="#8e8e8e" fill="none"><path d="M1798.5 647.5 h10 v10 h-10z" fill="#9a9a9a" stroke="none"/><path d="M1798.5 647.5 h10 v10 h-10zM1802.5 643.5 h10 v10 h-10zM1798.5 647.5 l4 -4 M1808.5 647.5 l4 -4 M1798.5 657.5 l4 -4 M1808.5 657.5 l4 -4"/><rect x="1803.5" y="648.5" width="3" height="3" fill="#bccade"/></g><g stroke="#8e8e8e" fill="none"><path d="M1824.5 643.5 h10 v10 h-10z" fill="#9a9a9a" stroke="none"/><path d="M1820.5 647.5 h10 v10 h-10zM1824.5 643.5 h10 v10 h-10zM1820.5 647.5 l4 -4 M1830.5 647.5 l4 -4 M1820.5 657.5 l4 -4 M1830.5 657.5 l4 -4"/><rect x="1825.5" y="648.5" width="3" height="3" fill="#bccade"/></g><g stroke="#8e8e8e" fill="none"><path d="M1842.5 657.5 l4 -4 h10 l-4 4z" fill="#9a9a9a" stroke="none"/><path d="M1842.5 647.5 h10 v10 h-10zM1846.5 643.5 h10 v10 h-10zM1842.5 647.5 l4 -4 M1852.5 647.5 l4 -4 M1842.5 657.5 l4 -4 M1852.5 657.5 l4 -4"/><rect x="1847.5" y="648.5" width="3" height="3" fill="#bccade"/></g><g stroke="#8e8e8e" fill="none"><path d="M1864.5 647.5 l4 -4 h10 l-4 4z" fill="#9a9a9a" stroke="none"/><path d="M1864.5 647.5 h10 v10 h-10zM1868.5 643.5 h10 v10 h-10zM1864.5 647.5 l4 -4 M1874.5 647.5 l4 -4 M1864.5 657.5 l4 -4 M1874.5 657.5 l4 -4"/><rect x="1869.5" y="648.5" width="3" height="3" fill="#bccade"/></g><rect x="1747" y="642" width="1" height="17" fill="#8391ad"/><rect x="1886" y="642" width="1" height="17" fill="#8391ad"/><g shape-rendering="auto"><path d="M1896.500 646 v9 a4.500 2 0 0 0 9 0 v-9z" fill="#9a9a9a" stroke="#8e8e8e"/><ellipse cx="1901" cy="646" rx="4.500" ry="2" fill="#d0d0d0" stroke="#8e8e8e"/></g></svg>
<svg style="left:0;top:0" width="1920" height="1200" viewBox="0 0 1920 1200" shape-rendering="crispEdges"><path d="M416.6 155.5L523.8 155.5M761.6 155.5L654.5 155.5M416.6 172.5L523.8 172.5M761.6 172.5L654.5 172.5M416.6 188.5L523.8 188.5M761.6 188.5L654.5 188.5M424.5 155.6L424.5 172.5M753.5 155.6L753.5 172.5M432.5 155.6L432.5 172.5M745.5 155.6L745.5 172.5M441.5 155.6L441.5 172.5M736.5 155.6L736.5 172.5M457.5 155.6L457.5 172.5M720.5 155.6L720.5 172.5M474.5 155.6L474.5 172.5M703.5 155.6L703.5 172.5M490.5 155.6L490.5 172.5M687.5 155.6L687.5 172.5M506.5 155.6L506.5 172.5M671.5 155.6L671.5 172.5M416.5 155.6L416.5 566.2M761.5 155.6L761.5 566.2M523.5 155.6L523.5 566.2M654.5 155.6L654.5 566.2M424.5 172.5L424.5 392M753.5 172.5L753.5 392M506.5 172.5L506.5 566.2M671.5 172.5L671.5 566.2M432.5 188.4L432.5 270.2M745.5 188.4L745.5 270.2M498.5 188.4L498.5 279.4M679.5 188.4L679.5 279.4M515.5 188.4L515.5 279.4M662.5 188.4L662.5 279.4M416.6 196.5L424.4 196.5M761.6 196.5L753.8 196.5M515.3 196.5L523.8 196.5M662.9 196.5L654.5 196.5M416.6 206.5L424.4 206.5M761.6 206.5L753.8 206.5M515.3 206.5L523.8 206.5M662.9 206.5L654.5 206.5M416.6 229.5L424.4 229.5M761.6 229.5L753.8 229.5M515.3 229.5L523.8 229.5M662.9 229.5L654.5 229.5M416.6 253.5L424.4 253.5M761.6 253.5L753.8 253.5M515.3 253.5L523.8 253.5M662.9 253.5L654.5 253.5M416.6 262.5L424.4 262.5M761.6 262.5L753.8 262.5M515.3 262.5L523.8 262.5M662.9 262.5L654.5 262.5M424.4 229.5L432.5 229.5M753.8 229.5L745.7 229.5M498.8 229.5L506.5 229.5M679.5 229.5L671.7 229.5M465.5 188.4L465.5 197.5M712.5 188.4L712.5 197.5M465.5 262.5L465.5 270.2M712.5 262.5L712.5 270.2M416.6 270.5L523.8 270.5M761.6 270.5L654.5 270.5M498.8 279.5L515.3 279.5M416.6 287.5L515.3 287.5M761.6 287.5L662.9 287.5M515.5 287.1L515.5 566.2M662.5 287.1L662.5 566.2M416.6 290.5L424.4 290.5M761.6 290.5L753.8 290.5M416.6 299.5L424.4 299.5M761.6 299.5L753.8 299.5M441.5 315L441.5 369.4M736.5 315L736.5 369.4M490.5 287.1L490.5 566.2M687.5 287.1L687.5 566.2M465.5 287.1L465.5 290.2M712.5 287.1L712.5 290.2M416.6 320.5L449.8 320.5M761.6 320.5L728.5 320.5M416.6 328.5L449.8 328.5M761.6 328.5L728.5 328.5M416.5 320.6L416.5 328.4M761.5 320.6L761.5 328.4M449.5 320.6L449.5 328.4M728.5 320.6L728.5 328.4M482.2 320.5L506.5 320.5M696 320.5L671.7 320.5M482.2 328.5L506.5 328.5M696 328.5L671.7 328.5M482.5 320.6L482.5 328.4M695.5 320.6L695.5 328.4M506.5 320.6L506.5 328.4M671.5 320.6L671.5 328.4M416.6 369.5L589.1 369.5M761.6 369.5L589.1 369.5M589.5 254.4L589.5 290.4M572.5 270.8L572.5 287.5M605.5 270.8L605.5 287.5M556.2 287.5L589.1 287.5M622 287.5L589.1 287.5M556.5 286.8L556.5 369.4M621.5 286.8L621.5 369.4M539.5 303.8L539.5 320.6M638.5 303.8L638.5 320.6M560.5 319.8L560.5 369.4M617.5 319.8L617.5 369.4M523.8 320.5L560.8 320.5M654.5 320.5L617.4 320.5M556.2 328.5L560.8 328.5M622 328.5L617.4 328.5M527.5 336.2L527.5 369.4M650.5 336.2L650.5 369.4M551.5 336.2L551.5 369.4M626.5 336.2L626.5 369.4M524.5 320.6L524.5 369.4M653.5 320.6L653.5 369.4M555.5 336.9L555.5 369.4M622.5 336.9L622.5 369.4M507.8 336.5L527.5 336.5M670.4 336.5L650.7 336.5M551.9 336.5L556.2 336.5M626.3 336.5L622 336.5M432.5 369.4L432.5 566.2M745.5 369.4L745.5 566.2M506.5 371.5L523.8 371.5M671.7 371.5L654.5 371.5M506.5 381.5L523.8 381.5M671.7 381.5L654.5 381.5M506.5 384.5L523.8 384.5M671.7 384.5L654.5 384.5M506.5 402.5L523.8 402.5M671.7 402.5L654.5 402.5M506.5 443.5L523.8 443.5M671.7 443.5L654.5 443.5M506.5 454.5L523.8 454.5M671.7 454.5L654.5 454.5M506.5 466.5L523.8 466.5M671.7 466.5L654.5 466.5M506.5 468.5L523.8 468.5M671.7 468.5L654.5 468.5M506.5 471.5L523.8 471.5M671.7 471.5L654.5 471.5M506.5 484.5L523.8 484.5M671.7 484.5L654.5 484.5M506.5 508.5L523.8 508.5M671.7 508.5L654.5 508.5M506.5 516.5L523.8 516.5M671.7 516.5L654.5 516.5M432.5 385.5L490.4 385.5M745.7 385.5L687.8 385.5M432.5 387.5L490.4 387.5M745.7 387.5L687.8 387.5M435.5 398.4L435.5 435M742.5 398.4L742.5 435M456.5 398.4L456.5 435M721.5 398.4L721.5 435M432.5 385.6L432.5 435M745.5 385.6L745.5 435M442.5 406.1L442.5 435M735.5 406.1L735.5 435M451.5 406.1L451.5 435M726.5 406.1L726.5 435M432.5 411.5L442.8 411.5M745.7 411.5L735.4 411.5M451.5 411.5L461.4 411.5M726.7 411.5L716.8 411.5M434.9 389.5L436.6 389.5M743.3 389.5L741.6 389.5M439.7 389.5L441.4 389.5M738.5 389.5L736.8 389.5M444.6 389.5L446.3 389.5M733.6 389.5L731.9 389.5M449.4 389.5L451.1 389.5M728.8 389.5L727.1 389.5M454.2 389.5L455.9 389.5M724 389.5L722.3 389.5M459 389.5L460.7 389.5M719.2 389.5L717.5 389.5M432.5 393.5L461.4 393.5M745.7 393.5L716.8 393.5M464.5 398.4L464.5 435M713.5 398.4L713.5 435M485.5 398.4L485.5 435M692.5 398.4L692.5 435M461.5 385.6L461.5 435M716.5 385.6L716.5 435M471.5 406.1L471.5 435M706.5 406.1L706.5 435M480.5 406.1L480.5 435M697.5 406.1L697.5 435M461.4 411.5L471.7 411.5M716.8 411.5L706.5 411.5M480.4 411.5L490.4 411.5M697.8 411.5L687.8 411.5M463.9 389.5L465.6 389.5M714.3 389.5L712.6 389.5M468.7 389.5L470.4 389.5M709.5 389.5L707.8 389.5M473.5 389.5L475.2 389.5M704.7 389.5L703 389.5M478.3 389.5L480 389.5M699.9 389.5L698.2 389.5M483.2 389.5L484.9 389.5M695 389.5L693.3 389.5M488 389.5L489.7 389.5M690.2 389.5L688.5 389.5M461.4 393.5L490.4 393.5M716.8 393.5L687.8 393.5M490.5 385.6L490.5 435M687.5 385.6L687.5 435M416.6 385.5L432.5 385.5M761.6 385.5L745.7 385.5M416.6 387.5L432.5 387.5M761.6 387.5L745.7 387.5M418.5 398.4L418.5 411.2M759.5 398.4L759.5 411.2M429.5 398.4L429.5 411.2M748.5 398.4L748.5 411.2M416.5 385.6L416.5 411.2M761.5 385.6L761.5 411.2M421.5 406.1L421.5 411.2M756.5 406.1L756.5 411.2M427.5 406.1L427.5 411.2M750.5 406.1L750.5 411.2M416.6 411.5L421.4 411.5M761.6 411.5L756.8 411.5M427.7 411.5L432.5 411.5M750.5 411.5L745.7 411.5M417.9 389.5L418.9 389.5M760.3 389.5L759.3 389.5M420.6 389.5L421.5 389.5M757.6 389.5L756.7 389.5M423.2 389.5L424.2 389.5M755 389.5L754 389.5M425.9 389.5L426.8 389.5M752.3 389.5L751.4 389.5M428.5 389.5L429.5 389.5M749.7 389.5L748.7 389.5M431.2 389.5L432.1 389.5M747 389.5L746.1 389.5M416.6 393.5L432.5 393.5M761.6 393.5L745.7 393.5M432.5 385.6L432.5 411.2M745.5 385.6L745.5 411.2M523.8 385.5L589.1 385.5M654.5 385.5L589.1 385.5M523.8 387.5L589.1 387.5M654.5 387.5L589.1 387.5M527.5 398.4L527.5 435M650.5 398.4L650.5 435M551.5 398.4L551.5 435M626.5 398.4L626.5 435M523.5 385.6L523.5 435M654.5 385.6L654.5 435M535.5 406.1L535.5 435M642.5 406.1L642.5 435M545.5 406.1L545.5 435M632.5 406.1L632.5 435M523.8 411.5L535.3 411.5M654.5 411.5L642.9 411.5M545.2 411.5L556.4 411.5M633 411.5L621.8 411.5M526.5 389.5L528.4 389.5M651.7 389.5L649.8 389.5M531.9 389.5L533.8 389.5M646.3 389.5L644.4 389.5M537.4 389.5L539.3 389.5M640.8 389.5L638.9 389.5M542.8 389.5L544.7 389.5M635.4 389.5L633.5 389.5M548.3 389.5L550.2 389.5M629.9 389.5L628 389.5M553.7 389.5L555.6 389.5M624.5 389.5L622.6 389.5M523.8 393.5L556.4 393.5M654.5 393.5L621.8 393.5M559.5 398.4L559.5 435M618.5 398.4L618.5 435M583.5 398.4L583.5 435M594.5 398.4L594.5 435M556.5 385.6L556.5 435M621.5 385.6L621.5 435M568.5 406.1L568.5 435M609.5 406.1L609.5 435M577.5 406.1L577.5 435M600.5 406.1L600.5 435M556.4 411.5L568 411.5M621.8 411.5L610.2 411.5M577.8 411.5L589.1 411.5M600.4 411.5L589.1 411.5M559.1 389.5L561.1 389.5M619.1 389.5L617.1 389.5M564.6 389.5L566.5 389.5M613.6 389.5L611.7 389.5M570 389.5L571.9 389.5M608.2 389.5L606.3 389.5M575.5 389.5L577.4 389.5M602.7 389.5L600.8 389.5M580.9 389.5L582.8 389.5M597.3 389.5L595.4 389.5M586.4 389.5L588.3 389.5M591.8 389.5L589.9 389.5M556.4 393.5L589.1 393.5M621.8 393.5L589.1 393.5M589.5 385.6L589.5 435M588.5 385.6L588.5 435M432.5 435.5L490.4 435.5M745.7 435.5L687.8 435.5M515.3 435.5L589.1 435.5M662.9 435.5L589.1 435.5M506.5 443.5L589.1 443.5M671.7 443.5L589.1 443.5M416.6 451.5L589.1 451.5M761.6 451.5L589.1 451.5M455.5 398L455.5 451.5M722.5 398L722.5 451.5M457.5 398L457.5 451.5M720.5 398L720.5 451.5M462.5 398L462.5 451.5M715.5 398L715.5 451.5M466.5 398L466.5 451.5M711.5 398L711.5 451.5M479.5 398L479.5 451.5M698.5 398L698.5 451.5M486.5 398L486.5 451.5M691.5 398L691.5 451.5M440.5 411.2L440.5 435M737.5 411.2L737.5 435M446.5 411.2L446.5 435M731.5 411.2L731.5 435M471.5 411.2L471.5 435M706.5 411.2L706.5 435M475.5 411.2L475.5 435M702.5 411.2L702.5 435M545.5 435L545.5 451.5M632.5 435L632.5 451.5M551.5 435L551.5 451.5M626.5 435L626.5 451.5M556.5 435L556.5 451.5M621.5 435L621.5 451.5M578.5 435L578.5 451.5M599.5 435L599.5 451.5M583.5 435L583.5 451.5M594.5 435L594.5 451.5M589.5 435L589.5 454.4M428.8 467.5L494.4 467.5M749.5 467.5L683.8 467.5M428.8 469.5L494.4 469.5M749.5 469.5L683.8 469.5M432.5 480.9L432.5 549M745.5 480.9L745.5 549M456.5 480.9L456.5 549M721.5 480.9L721.5 549M428.5 467.5L428.5 549M749.5 467.5L749.5 549M440.5 489L440.5 549M737.5 489L737.5 549M450.5 489L450.5 549M727.5 489L727.5 549M428.8 494.5L440.4 494.5M749.5 494.5L737.8 494.5M450.3 494.5L461.6 494.5M727.9 494.5L716.6 494.5M431.5 471.5L433.4 471.5M746.7 471.5L744.8 471.5M437 471.5L438.9 471.5M741.2 471.5L739.3 471.5M442.4 471.5L444.3 471.5M735.8 471.5L733.9 471.5M447.9 471.5L449.8 471.5M730.3 471.5L728.4 471.5M453.4 471.5L455.3 471.5M724.8 471.5L722.9 471.5M458.8 471.5L460.8 471.5M719.4 471.5L717.4 471.5M428.8 475.5L461.6 475.5M749.5 475.5L716.6 475.5M465.5 480.9L465.5 549M712.5 480.9L712.5 549M488.5 480.9L488.5 549M689.5 480.9L689.5 549M461.5 467.5L461.5 549M716.5 467.5L716.5 549M473.5 489L473.5 549M704.5 489L704.5 549M483.5 489L483.5 549M694.5 489L694.5 549M461.6 494.5L473.2 494.5M716.6 494.5L705 494.5M483.1 494.5L494.4 494.5M695.1 494.5L683.8 494.5M464.3 471.5L466.2 471.5M713.9 471.5L712 471.5M469.8 471.5L471.7 471.5M708.4 471.5L706.5 471.5M475.3 471.5L477.2 471.5M702.9 471.5L701 471.5M480.7 471.5L482.6 471.5M697.5 471.5L695.6 471.5M486.2 471.5L488.1 471.5M692 471.5L690.1 471.5M491.7 471.5L493.6 471.5M686.5 471.5L684.6 471.5M461.6 475.5L494.4 475.5M716.6 475.5L683.8 475.5M494.5 467.5L494.5 549M683.5 467.5L683.5 549M428.5 467.5L428.5 566.2M749.5 467.5L749.5 566.2M494.5 467.5L494.5 566.2M683.5 467.5L683.5 566.2M408.5 500.5L416.6 500.5M769.7 500.5L761.6 500.5M408.5 566.5L416.6 566.5M769.7 566.5L761.6 566.5M408.5 500.5L408.5 566.2M769.5 500.5L769.5 566.2M416.5 500.5L416.5 566.2M761.5 500.5L761.5 566.2M425.5 494.4L425.5 566.2M752.5 494.4L752.5 566.2M441.5 494.4L441.5 566.2M736.5 494.4L736.5 566.2M451.5 494.4L451.5 566.2M726.5 494.4L726.5 566.2M457.5 494.4L457.5 566.2M720.5 494.4L720.5 566.2M461.5 494.4L461.5 566.2M716.5 494.4L716.5 566.2M466.5 494.4L466.5 566.2M711.5 494.4L711.5 566.2M475.5 494.4L475.5 566.2M702.5 494.4L702.5 566.2M484.5 494.4L484.5 566.2M693.5 494.4L693.5 566.2M428.8 549.5L494.4 549.5M749.5 549.5L683.8 549.5M416.6 495.5L424.4 495.5M761.6 495.5L753.8 495.5M416.6 526.5L424.4 526.5M761.6 526.5L753.8 526.5M416.6 549.5L424.4 549.5M761.6 549.5L753.8 549.5M416.6 550.5L424.4 550.5M761.6 550.5L753.8 550.5M424.5 452L424.5 566.2M753.5 452L753.5 566.2M539.5 505L539.5 566.2M638.5 505L638.5 566.2M523.8 508.5L539.4 508.5M654.5 508.5L638.8 508.5M408.5 566.5L589.1 566.5M769.7 566.5L589.1 566.5M326.2 566.5L818.5 566.5M326.2 582.5L818.5 582.5M326.5 566.2L326.5 582.5M818.5 566.2L818.5 582.5" fill="none" stroke="#fff" stroke-width="1"/><path d="M418.8 155.6L425 140.2M759.4 155.6L753.2 140.2M425 140.2L430.8 155.6M753.2 140.2L747.4 155.6M509.2 155.6L515 140.2M669 155.6L663.2 140.2M515 140.2L520.8 155.6M663.2 140.2L657.4 155.6M498.1 230 L497.8 225.8 L497 221.6 L495.6 217.6 L493.7 213.8 L491.4 210.2 L488.6 207 L485.4 204.2 L481.9 201.9 L478 200 L474 198.6 L469.8 197.8 L465.6 197.5 L461.4 197.8 L457.2 198.6 L453.2 200 L449.4 201.9 L445.8 204.2 L442.6 207 L439.8 210.2 L437.5 213.8 L435.6 217.6 L434.2 221.6 L433.4 225.8 L433.1 230 L433.4 234.2 L434.2 238.4 L435.6 242.4 L437.5 246.2 L439.8 249.8 L442.6 253 L445.8 255.8 L449.4 258.1 L453.2 260 L457.2 261.4 L461.4 262.2 L465.6 262.5 L469.8 262.2 L474 261.4 L478 260 L481.9 258.1 L485.4 255.8 L488.6 253 L491.4 249.8 L493.7 246.2 L495.6 242.4 L497 238.4 L497.8 234.2 L498.1 230M680.1 230 L680.4 225.8 L681.2 221.6 L682.6 217.6 L684.5 213.8 L686.8 210.2 L689.6 207 L692.8 204.2 L696.4 201.9 L700.2 200 L704.2 198.6 L708.4 197.8 L712.6 197.5 L716.8 197.8 L721 198.6 L725 200 L728.9 201.9 L732.4 204.2 L735.6 207 L738.4 210.2 L740.7 213.8 L742.6 217.6 L744 221.6 L744.8 225.8 L745.1 230 L744.8 234.2 L744 238.4 L742.6 242.4 L740.7 246.2 L738.4 249.8 L735.6 253 L732.4 255.8 L728.9 258.1 L725 260 L721 261.4 L716.8 262.2 L712.6 262.5 L708.4 262.2 L704.2 261.4 L700.2 260 L696.4 258.1 L692.8 255.8 L689.6 253 L686.8 249.8 L684.5 246.2 L682.6 242.4 L681.2 238.4 L680.4 234.2 L680.1 230M424.4 188.4L442.6 206.8M753.8 188.4L735.6 206.8M506.5 188.4L488.6 206.8M671.7 188.4L689.6 206.8M424.4 270.2L442.6 253.2M753.8 270.2L735.6 253.2M506.5 270.2L488.6 253.2M671.7 270.2L689.6 253.2M490.2 314.8 L490 311.6 L489.4 308.4 L488.3 305.4 L486.9 302.5 L485.2 299.8 L483.1 297.4 L480.7 295.3 L478 293.5 L475.1 292.1 L472.1 291 L469 290.4 L465.8 290.2 L462.6 290.4 L459.5 291 L456.5 292.1 L453.6 293.5 L450.9 295.3 L448.5 297.4 L446.4 299.8 L444.7 302.5 L443.3 305.4 L442.2 308.4 L441.6 311.6 L441.4 314.8M688 314.8 L688.2 311.6 L688.8 308.4 L689.9 305.4 L691.3 302.5 L693 299.8 L695.1 297.4 L697.5 295.3 L700.2 293.5 L703.1 292.1 L706.1 291 L709.2 290.4 L712.4 290.2 L715.6 290.4 L718.7 291 L721.7 292.1 L724.6 293.5 L727.3 295.3 L729.7 297.4 L731.8 299.8 L733.5 302.5 L734.9 305.4 L736 308.4 L736.6 311.6 L736.8 314.8M425.4 288L448.1 298.8M752.8 288L730.1 298.8M505.6 288L484.4 298.8M672.6 288L693.8 298.8M589.1 254.4L507.8 335.6M589.1 254.4L670.4 335.6M589.1 271.3L524.6 335.6M589.1 271.3L653.6 335.6M556.2 287.5L567.5 301.5M622 287.5L610.7 301.5M572.5 287.5L561 299M605.7 287.5L617.2 299M589.1 290.6 L585.9 290.8 L582.8 291.3 L579.7 292.2 L576.8 293.5 L574 295.1 L571.4 297 L569 299.2 L566.9 301.6 L565.1 304.3 L563.5 307.1 L562.3 310.2 L561.4 313.3 L560.9 316.5 L560.7 319.8M589.1 290.6 L592.3 290.8 L595.4 291.3 L598.5 292.2 L601.4 293.5 L604.2 295.1 L606.8 297 L609.2 299.2 L611.3 301.6 L613.1 304.3 L614.7 307.1 L615.9 310.2 L616.8 313.3 L617.3 316.5 L617.5 319.8M551.9 336.2 L551.6 333.4 L550.7 330.7 L549.2 328.3 L547.3 326.3 L545 324.8 L542.4 323.9 L539.7 323.6 L537 323.9 L534.4 324.8 L532.1 326.3 L530.2 328.3 L528.7 330.7 L527.8 333.4 L527.5 336.2M626.3 336.2 L626.6 333.4 L627.5 330.7 L629 328.3 L630.9 326.3 L633.2 324.8 L635.8 323.9 L638.5 323.6 L641.2 323.9 L643.8 324.8 L646.1 326.3 L648 328.3 L649.5 330.7 L650.4 333.4 L650.7 336.2M524.4 320.6L531.2 327.5M653.8 320.6L647 327.5M555.6 320.6L548.8 327.5M622.6 320.6L629.5 327.5M539.4 320.6L545 326M638.8 320.6L633.2 326M419.5 392.5L424.4 378.8M758.7 392.5L753.8 378.8M424.4 378.8L429.8 392.5M753.8 378.8L748.4 392.5M505 371L480 384.6M673.2 371L698.2 384.6M505 371L495 385.4M673.2 371L683.2 385.4M480 384.6L495 385.4M698.2 384.6L683.2 385.4M442.8 406.1L443.6 402.5M735.4 406.1L734.6 402.5M443.6 402.5L445.2 398.9M734.6 402.5L733 398.9M445.2 398.9L447.1 396.9M733 398.9L731.1 396.9M447.1 396.9L449.1 398.9M731.1 396.9L729.1 398.9M449.1 398.9L450.7 402.5M729.1 398.9L727.5 402.5M450.7 402.5L451.5 406.1M727.5 402.5L726.7 406.1M432.5 387.2L437.3 393.3M745.7 387.2L740.9 393.3M437.3 393.3L442.1 387.2M740.9 393.3L736.1 387.2M442.1 387.2L447 393.3M736.1 387.2L731.2 393.3M447 393.3L451.8 387.2M731.2 393.3L726.4 387.2M451.8 387.2L456.6 393.3M726.4 387.2L721.6 393.3M456.6 393.3L461.4 387.2M721.6 393.3L716.8 387.2M435.5 411.2L436.6 403.6M742.7 411.2L741.6 403.6M436.6 403.6L439.2 399.7M741.6 403.6L739 399.7M442.8 411.2L441.7 403.6M735.4 411.2L736.5 403.6M441.7 403.6L439.2 399.7M736.5 403.6L739 399.7M435.5 393.3L439.2 399.7M742.7 393.3L739 399.7M442.8 393.3L439.2 399.7M735.4 393.3L739 399.7M451.5 411.2L452.2 403.6M726.7 411.2L726 403.6M452.2 403.6L454.1 399.7M726 403.6L724.1 399.7M456.7 411.2L455.9 403.6M721.5 411.2L722.3 403.6M455.9 403.6L454.1 399.7M722.3 403.6L724.1 399.7M451.5 393.3L454.1 399.7M726.7 393.3L724.1 399.7M456.7 393.3L454.1 399.7M721.5 393.3L724.1 399.7M456.7 411.2L457.8 403.6M721.5 411.2L720.4 403.6M457.8 403.6L460.6 399.7M720.4 403.6L717.6 399.7M464.5 411.2L463.3 403.6M713.7 411.2L714.9 403.6M463.3 403.6L460.6 399.7M714.9 403.6L717.6 399.7M456.7 393.3L460.6 399.7M721.5 393.3L717.6 399.7M464.5 393.3L460.6 399.7M713.7 393.3L717.6 399.7M471.7 406.1L472.5 402.5M706.5 406.1L705.7 402.5M472.5 402.5L474.1 398.9M705.7 402.5L704.1 398.9M474.1 398.9L476.1 396.9M704.1 398.9L702.1 396.9M476.1 396.9L478 398.9M702.1 396.9L700.2 398.9M478 398.9L479.6 402.5M700.2 398.9L698.6 402.5M479.6 402.5L480.4 406.1M698.6 402.5L697.8 406.1M461.4 387.2L466.3 393.3M716.8 387.2L711.9 393.3M466.3 393.3L471.1 387.2M711.9 393.3L707.1 387.2M471.1 387.2L475.9 393.3M707.1 387.2L702.3 393.3M475.9 393.3L480.8 387.2M702.3 393.3L697.5 387.2M480.8 387.2L485.6 393.3M697.5 387.2L692.6 393.3M485.6 393.3L490.4 387.2M692.6 393.3L687.8 387.2M464.5 411.2L465.6 403.6M713.7 411.2L712.6 403.6M465.6 403.6L468.1 399.7M712.6 403.6L710.1 399.7M471.7 411.2L470.6 403.6M706.5 411.2L707.6 403.6M470.6 403.6L468.1 399.7M707.6 403.6L710.1 399.7M464.5 393.3L468.1 399.7M713.7 393.3L710.1 399.7M471.7 393.3L468.1 399.7M706.5 393.3L710.1 399.7M480.4 411.2L481.2 403.6M697.8 411.2L697 403.6M481.2 403.6L483 399.7M697 403.6L695.2 399.7M485.6 411.2L484.8 403.6M692.6 411.2L693.4 403.6M484.8 403.6L483 399.7M693.4 403.6L695.2 399.7M480.4 393.3L483 399.7M697.8 393.3L695.2 399.7M485.6 393.3L483 399.7M692.6 393.3L695.2 399.7M485.6 411.2L487.1 403.6M692.6 411.2L691.1 403.6M487.1 403.6L490.4 399.7M691.1 403.6L687.8 399.7M485.6 393.3L490.4 399.7M692.6 393.3L687.8 399.7M421.4 406.1L421.9 402.5M756.8 406.1L756.3 402.5M421.9 402.5L423.1 398.9M756.3 402.5L755.1 398.9M423.1 398.9L424.6 396.9M755.1 398.9L753.7 396.9M424.6 396.9L426 398.9M753.7 396.9L752.2 398.9M426 398.9L427.2 402.5M752.2 398.9L751 402.5M427.2 402.5L427.7 406.1M751 402.5L750.5 406.1M416.6 387.2L419.2 393.3M761.6 387.2L759 393.3M419.2 393.3L421.9 387.2M759 393.3L756.3 387.2M421.9 387.2L424.6 393.3M756.3 387.2L753.7 393.3M424.6 393.3L427.2 387.2M753.7 393.3L751 387.2M427.2 387.2L429.9 393.3M751 387.2L748.4 393.3M429.9 393.3L432.5 387.2M748.4 393.3L745.7 387.2M418.3 411.2L418.7 403.6M759.9 411.2L759.5 403.6M418.7 403.6L419.8 399.7M759.5 403.6L758.4 399.7M421.4 411.2L420.9 403.6M756.8 411.2L757.3 403.6M420.9 403.6L419.8 399.7M757.3 403.6L758.4 399.7M418.3 393.3L419.8 399.7M759.9 393.3L758.4 399.7M421.4 393.3L419.8 399.7M756.8 393.3L758.4 399.7M427.7 411.2L428.1 403.6M750.5 411.2L750.1 403.6M428.1 403.6L428.8 399.7M750.1 403.6L749.4 399.7M429.9 411.2L429.6 403.6M748.3 411.2L748.6 403.6M429.6 403.6L428.8 399.7M748.6 403.6L749.4 399.7M427.7 393.3L428.8 399.7M750.5 393.3L749.4 399.7M429.9 393.3L428.8 399.7M748.3 393.3L749.4 399.7M429.9 411.2L430.7 403.6M748.3 411.2L747.5 403.6M430.7 403.6L432.5 399.7M747.5 403.6L745.7 399.7M429.9 393.3L432.5 399.7M748.3 393.3L745.7 399.7M535.3 406.1L536.2 402.5M642.9 406.1L642 402.5M536.2 402.5L538 398.9M642 402.5L640.2 398.9M538 398.9L540.3 396.9M640.2 398.9L637.9 396.9M540.3 396.9L542.5 398.9M637.9 396.9L635.7 398.9M542.5 398.9L544.3 402.5M635.7 398.9L633.9 402.5M544.3 402.5L545.2 406.1M633.9 402.5L633 406.1M523.8 387.2L529.2 393.3M654.5 387.2L649 393.3M529.2 393.3L534.6 387.2M649 393.3L643.6 387.2M534.6 387.2L540.1 393.3M643.6 387.2L638.1 393.3M540.1 393.3L545.5 387.2M638.1 393.3L632.7 387.2M545.5 387.2L551 393.3M632.7 387.2L627.2 393.3M551 393.3L556.4 387.2M627.2 393.3L621.8 387.2M527.2 411.2L528.4 403.6M651 411.2L649.8 403.6M528.4 403.6L531.3 399.7M649.8 403.6L646.9 399.7M535.3 411.2L534.1 403.6M642.9 411.2L644.1 403.6M534.1 403.6L531.3 399.7M644.1 403.6L646.9 399.7M527.2 393.3L531.3 399.7M651 393.3L646.9 399.7M535.3 393.3L531.3 399.7M642.9 393.3L646.9 399.7M545.2 411.2L546 403.6M633 411.2L632.2 403.6M546 403.6L548.1 399.7M632.2 403.6L630.1 399.7M551 411.2L550.2 403.6M627.2 411.2L628 403.6M550.2 403.6L548.1 399.7M628 403.6L630.1 399.7M545.2 393.3L548.1 399.7M633 393.3L630.1 399.7M551 393.3L548.1 399.7M627.2 393.3L630.1 399.7M551 411.2L552.4 403.6M627.2 411.2L625.8 403.6M552.4 403.6L555.4 399.7M625.8 403.6L622.8 399.7M559.9 411.2L558.5 403.6M618.3 411.2L619.7 403.6M558.5 403.6L555.4 399.7M619.7 403.6L622.8 399.7M551 393.3L555.4 399.7M627.2 393.3L622.8 399.7M559.9 393.3L555.4 399.7M618.3 393.3L622.8 399.7M568 406.1L568.9 402.5M610.2 406.1L609.3 402.5M568.9 402.5L570.7 398.9M609.3 402.5L607.5 398.9M570.7 398.9L572.9 396.9M607.5 398.9L605.3 396.9M572.9 396.9L575.1 398.9M605.3 396.9L603.1 398.9M575.1 398.9L576.9 402.5M603.1 398.9L601.3 402.5M576.9 402.5L577.8 406.1M601.3 402.5L600.4 406.1M556.4 387.2L561.9 393.3M621.8 387.2L616.3 393.3M561.9 393.3L567.3 387.2M616.3 393.3L610.9 387.2M567.3 387.2L572.8 393.3M610.9 387.2L605.4 393.3M572.8 393.3L578.2 387.2M605.4 393.3L600 387.2M578.2 387.2L583.7 393.3M600 387.2L594.5 393.3M583.7 393.3L589.1 387.2M594.5 393.3L589.1 387.2M559.9 411.2L561.1 403.6M618.3 411.2L617.1 403.6M561.1 403.6L563.9 399.7M617.1 403.6L614.3 399.7M568 411.2L566.8 403.6M610.2 411.2L611.4 403.6M566.8 403.6L563.9 399.7M611.4 403.6L614.3 399.7M559.9 393.3L563.9 399.7M618.3 393.3L614.3 399.7M568 393.3L563.9 399.7M610.2 393.3L614.3 399.7M577.8 411.2L578.7 403.6M600.4 411.2L599.5 403.6M578.7 403.6L580.8 399.7M599.5 403.6L597.4 399.7M583.7 411.2L582.8 403.6M594.5 411.2L595.4 403.6M582.8 403.6L580.8 399.7M595.4 403.6L597.4 399.7M577.8 393.3L580.8 399.7M600.4 393.3L597.4 399.7M583.7 393.3L580.8 399.7M594.5 393.3L597.4 399.7M583.7 411.2L585.3 403.6M594.5 411.2L592.9 403.6M585.3 403.6L589.1 399.7M592.9 403.6L589.1 399.7M583.7 393.3L589.1 399.7M594.5 393.3L589.1 399.7M433 436 L433.3 430.4 L434.4 424.8 L436 419.4 L438.3 414.2 L441.3 409.2 L444.8 404.6 L448.9 400.3 L453.4 396.4 L458.4 393 L463.8 390.1M745.2 436 L744.9 430.4 L743.8 424.8 L742.2 419.4 L739.9 414.2 L736.9 409.2 L733.4 404.6 L729.3 400.3 L724.8 396.4 L719.8 393 L714.4 390.1M505.6 452.5L483 467M672.6 452.5L695.2 467M440.4 489L441.3 485.3M737.8 489L736.9 485.3M441.3 485.3L443.1 481.5M736.9 485.3L735.1 481.5M443.1 481.5L445.3 479.3M735.1 481.5L732.9 479.3M445.3 479.3L447.5 481.5M732.9 479.3L730.7 481.5M447.5 481.5L449.4 485.3M730.7 481.5L728.8 485.3M449.4 485.3L450.3 489M728.8 485.3L727.9 489M428.8 469.1L434.2 475.6M749.5 469.1L744 475.6M434.2 475.6L439.7 469.1M744 475.6L738.5 469.1M439.7 469.1L445.2 475.6M738.5 469.1L733 475.6M445.2 475.6L450.6 469.1M733 475.6L727.6 469.1M450.6 469.1L456.1 475.6M727.6 469.1L722.1 475.6M456.1 475.6L461.6 469.1M722.1 475.6L716.6 469.1M432.2 494.4L433.4 486.3M746 494.4L744.8 486.3M433.4 486.3L436.3 482.3M744.8 486.3L741.9 482.3M440.4 494.4L439.2 486.3M737.8 494.4L739 486.3M439.2 486.3L436.3 482.3M739 486.3L741.9 482.3M432.2 475.6L436.3 482.3M746 475.6L741.9 482.3M440.4 475.6L436.3 482.3M737.8 475.6L741.9 482.3M450.3 494.4L451.1 486.3M727.9 494.4L727.1 486.3M451.1 486.3L453.2 482.3M727.1 486.3L725 482.3M456.2 494.4L455.3 486.3M722 494.4L722.9 486.3M455.3 486.3L453.2 482.3M722.9 486.3L725 482.3M450.3 475.6L453.2 482.3M727.9 475.6L725 482.3M456.2 475.6L453.2 482.3M722 475.6L725 482.3M456.2 494.4L457.5 486.3M722 494.4L720.7 486.3M457.5 486.3L460.6 482.3M720.7 486.3L717.6 482.3M465 494.4L463.7 486.3M713.2 494.4L714.5 486.3M463.7 486.3L460.6 482.3M714.5 486.3L717.6 482.3M456.2 475.6L460.6 482.3M722 475.6L717.6 482.3M465 475.6L460.6 482.3M713.2 475.6L717.6 482.3M473.2 489L474.1 485.3M705 489L704.1 485.3M474.1 485.3L475.9 481.5M704.1 485.3L702.3 481.5M475.9 481.5L478.2 479.3M702.3 481.5L700 479.3M478.2 479.3L480.4 481.5M700 479.3L697.8 481.5M480.4 481.5L482.2 485.3M697.8 481.5L696 485.3M482.2 485.3L483.1 489M696 485.3L695.1 489M461.6 469.1L467 475.6M716.6 469.1L711.2 475.6M467 475.6L472.5 469.1M711.2 475.6L705.7 469.1M472.5 469.1L478 475.6M705.7 469.1L700.2 475.6M478 475.6L483.5 469.1M700.2 475.6L694.7 469.1M483.5 469.1L488.9 475.6M694.7 469.1L689.3 475.6M488.9 475.6L494.4 469.1M689.3 475.6L683.8 469.1M465 494.4L466.3 486.3M713.2 494.4L711.9 486.3M466.3 486.3L469.1 482.3M711.9 486.3L709.1 482.3M473.2 494.4L472 486.3M705 494.4L706.2 486.3M472 486.3L469.1 482.3M706.2 486.3L709.1 482.3M465 475.6L469.1 482.3M713.2 475.6L709.1 482.3M473.2 475.6L469.1 482.3M705 475.6L709.1 482.3M483.1 494.4L484 486.3M695.1 494.4L694.2 486.3M484 486.3L486 482.3M694.2 486.3L692.2 482.3M489 494.4L488.1 486.3M689.2 494.4L690.1 486.3M488.1 486.3L486 482.3M690.1 486.3L692.2 482.3M483.1 475.6L486 482.3M695.1 475.6L692.2 482.3M489 475.6L486 482.3M689.2 475.6L692.2 482.3M489 494.4L490.6 486.3M689.2 494.4L687.6 486.3M490.6 486.3L494.4 482.3M687.6 486.3L683.8 482.3M489 475.6L494.4 482.3M689.2 475.6L683.8 482.3M505.6 468.8L433 500.6M672.6 468.8L745.2 500.6M482.5 483.8L433 516.2M695.7 483.8L745.2 516.2M416.6 460L424.4 466M761.6 460L753.8 466M416.6 463L424.4 469M761.6 463L753.8 469M416.6 466L424.4 472M761.6 466L753.8 472M416.6 469L424.4 475M761.6 469L753.8 475M416.6 490L424.4 496M761.6 490L753.8 496M416.6 493L424.4 499M761.6 493L753.8 499M416.6 496L424.4 502M761.6 496L753.8 502M416.6 499L424.4 505M761.6 499L753.8 505M589.1 454.4 L585.8 454.5 L582.6 454.8 L579.4 455.4 L576.2 456.1 L573.1 457.1 L570.1 458.3 L567.1 459.6 L564.2 461.2 L561.5 462.9 L558.8 464.9 L556.3 467 L554 469.2 L551.7 471.6 L549.7 474.2 L547.8 476.9 L546.1 479.7 L544.5 482.6 L543.2 485.6 L542 488.7 L541.1 491.9 L540.4 495.1 L539.8 498.4 L539.5 501.7 L539.4 505M589.1 454.4 L592.4 454.5 L595.6 454.8 L598.8 455.4 L602 456.1 L605.1 457.1 L608.1 458.3 L611.1 459.6 L614 461.2 L616.7 462.9 L619.4 464.9 L621.9 467 L624.2 469.2 L626.5 471.6 L628.5 474.2 L630.4 476.9 L632.1 479.7 L633.7 482.6 L635 485.6 L636.2 488.7 L637.1 491.9 L637.8 495.1 L638.4 498.4 L638.7 501.7 L638.8 505M523.8 443.8L553.8 470M654.5 443.8L624.5 470" fill="none" stroke="#fff" stroke-width="0.990"/><path d="M441.3 393.3 L444.3 393.3 L443.2 407.1 L442.4 407.1ZM736.9 393.3 L733.9 393.3 L735 407.1 L735.8 407.1ZM450 393.3 L453 393.3 L451.9 407.1 L451.1 407.1ZM728.2 393.3 L725.2 393.3 L726.3 407.1 L727.1 407.1ZM434.5 393.3 L436.5 393.3 L435.5 404.1ZM743.7 393.3 L741.7 393.3 L742.7 404.1ZM455.7 393.3 L457.7 393.3 L456.7 404.1ZM722.5 393.3 L720.5 393.3 L721.5 404.1ZM470.2 393.3 L473.2 393.3 L472.1 407.1 L471.3 407.1ZM708 393.3 L705 393.3 L706.1 407.1 L706.9 407.1ZM478.9 393.3 L481.9 393.3 L480.8 407.1 L480 407.1ZM699.3 393.3 L696.3 393.3 L697.4 407.1 L698.2 407.1ZM463.5 393.3 L465.5 393.3 L464.5 404.1ZM714.7 393.3 L712.7 393.3 L713.7 404.1ZM484.6 393.3 L486.6 393.3 L485.6 404.1ZM693.6 393.3 L691.6 393.3 L692.6 404.1ZM419.9 393.3 L422.9 393.3 L421.8 407.1 L421 407.1ZM758.3 393.3 L755.3 393.3 L756.4 407.1 L757.2 407.1ZM426.2 393.3 L429.2 393.3 L428.1 407.1 L427.3 407.1ZM752 393.3 L749 393.3 L750.1 407.1 L750.9 407.1ZM417.3 393.3 L419.3 393.3 L418.3 404.1ZM760.9 393.3 L758.9 393.3 L759.9 404.1ZM428.9 393.3 L430.9 393.3 L429.9 404.1ZM749.3 393.3 L747.3 393.3 L748.3 404.1ZM533.8 393.3 L536.8 393.3 L535.7 407.1 L534.9 407.1ZM644.4 393.3 L641.4 393.3 L642.5 407.1 L643.3 407.1ZM543.7 393.3 L546.7 393.3 L545.6 407.1 L544.8 407.1ZM634.5 393.3 L631.5 393.3 L632.6 407.1 L633.4 407.1ZM526.2 393.3 L528.2 393.3 L527.2 404.1ZM652 393.3 L650 393.3 L651 404.1ZM550 393.3 L552 393.3 L551 404.1ZM628.2 393.3 L626.2 393.3 L627.2 404.1ZM566.5 393.3 L569.5 393.3 L568.4 407.1 L567.6 407.1ZM611.7 393.3 L608.7 393.3 L609.8 407.1 L610.6 407.1ZM576.3 393.3 L579.3 393.3 L578.2 407.1 L577.4 407.1ZM601.9 393.3 L598.9 393.3 L600 407.1 L600.8 407.1ZM558.9 393.3 L560.9 393.3 L559.9 404.1ZM619.3 393.3 L617.3 393.3 L618.3 404.1ZM582.7 393.3 L584.7 393.3 L583.7 404.1ZM595.5 393.3 L593.5 393.3 L594.5 404.1ZM438.9 475.6 L441.9 475.6 L440.8 490 L440 490ZM739.3 475.6 L736.3 475.6 L737.4 490 L738.2 490ZM448.8 475.6 L451.8 475.6 L450.7 490 L449.9 490ZM729.4 475.6 L726.4 475.6 L727.5 490 L728.3 490ZM431.2 475.6 L433.2 475.6 L432.2 486.9ZM747 475.6 L745 475.6 L746 486.9ZM455.2 475.6 L457.2 475.6 L456.2 486.9ZM723 475.6 L721 475.6 L722 486.9ZM471.7 475.6 L474.7 475.6 L473.6 490 L472.8 490ZM706.5 475.6 L703.5 475.6 L704.6 490 L705.4 490ZM481.6 475.6 L484.6 475.6 L483.5 490 L482.7 490ZM696.6 475.6 L693.6 475.6 L694.7 490 L695.5 490ZM464 475.6 L466 475.6 L465 486.9ZM714.2 475.6 L712.2 475.6 L713.2 486.9ZM488 475.6 L490 475.6 L489 486.9ZM690.2 475.6 L688.2 475.6 L689.2 486.9Z" fill="#fff" stroke="none"/></svg>
<svg style="left:0;top:0" width="1920" height="1200" viewBox="0 0 1920 1200" shape-rendering="crispEdges"><path d="M1402.3 130.5L1418.5 130.5M1402.3 146.5L1418.5 146.5M1402.5 130.4L1402.5 146.2M1418.5 130.4L1418.5 146.2M1434.3 130.5L1450.7 130.5M1434.3 146.5L1450.7 146.5M1434.5 130.4L1434.5 146.2M1450.5 130.4L1450.5 146.2M1467.2 130.5L1499.8 130.5M1467.2 146.5L1499.8 146.5M1467.5 130.4L1467.5 146.2M1499.5 130.4L1499.5 146.2M1402.3 146.5L1499.8 146.5M1402.3 162.5L1499.8 162.5M1402.5 130.4L1402.5 533.3M1499.5 130.4L1499.5 533.3M1418.5 146.2L1418.5 243.3M1483.5 130.4L1483.5 533.3M1491.5 130.4L1491.5 533.3M1410.5 162.5L1410.5 243.3M1475.5 162.5L1475.5 251.4M1446.5 162.5L1446.5 171.5M1450.5 162.5L1450.5 171.5M1446.5 235.5L1446.5 243.3M1450.5 235.5L1450.5 243.3M1402.3 170.5L1410.4 170.5M1491.4 170.5L1499.8 170.5M1402.3 180.5L1410.4 180.5M1491.4 180.5L1499.8 180.5M1402.3 203.5L1410.4 203.5M1491.4 203.5L1499.8 203.5M1402.3 226.5L1410.4 226.5M1491.4 226.5L1499.8 226.5M1402.3 235.5L1410.4 235.5M1491.4 235.5L1499.8 235.5M1410.4 203.5L1418.4 203.5M1475.4 203.5L1491.4 203.5M1160.8 243.5L1499.8 243.5M1475.4 243.5L1491.4 243.5M1475.4 251.5L1491.4 251.5M1475.5 243.3L1475.5 251.4M1491.5 243.3L1491.5 251.4M1467.5 228L1467.5 533.3M1402.3 259.5L1499.8 259.5M1410.5 259.4L1410.5 412M1475.5 259.4L1475.5 533.3M1450.5 259.4L1450.5 262.5M1467.1 262.5L1499.8 262.5M1491.4 271.5L1499.8 271.5M1467.1 273.5L1483.3 273.5M1467.1 275.5L1483.3 275.5M1402.3 291.5L1499.8 291.5M1410.4 291.5L1434.6 291.5M1410.4 300.5L1434.6 300.5M1410.5 291.7L1410.5 300.4M1434.5 291.7L1434.5 300.4M1467.1 295.5L1483.3 295.5M1467.1 298.5L1483.3 298.5M1467.1 300.5L1499.8 300.5M1426.5 300.4L1426.5 340.5M1160.8 308.5L1483.3 308.5M1160.8 340.5L1499.8 340.5M1160.5 227.4L1160.5 533.3M1160.8 227.5L1402.3 227.5M1176.5 340.5L1176.5 533.3M1160.8 355.5L1176.3 355.5M1160.8 360.5L1176.3 360.5M1160.8 363.5L1176.3 363.5M1160.8 380.5L1176.3 380.5M1160.8 384.5L1176.3 384.5M1160.8 404.5L1176.3 404.5M1162.3 365.5L1174.8 365.5M1162.3 379.5L1174.8 379.5M1162.5 365L1162.5 379.7M1174.5 365L1174.5 379.7M1208.5 340.5L1208.5 343.3M1192.5 370L1192.5 412M1225.5 370L1225.5 412M1176.3 372.5L1192.5 372.5M1225 372.5L1241.3 372.5M1256.5 340.5L1256.5 533.3M1241.5 340.5L1241.5 533.3M1241.3 355.5L1256.8 355.5M1241.3 360.5L1256.8 360.5M1241.3 363.5L1256.8 363.5M1241.3 380.5L1256.8 380.5M1241.3 384.5L1256.8 384.5M1241.3 404.5L1256.8 404.5M1242.8 365.5L1255.3 365.5M1242.8 379.5L1255.3 379.5M1242.5 365L1242.5 379.7M1255.5 365L1255.5 379.7M1289.5 340.5L1289.5 343.3M1273.5 370L1273.5 412M1305.5 370L1305.5 412M1256.8 372.5L1273 372.5M1305.5 372.5L1321.8 372.5M1337.5 340.5L1337.5 533.3M1321.5 340.5L1321.5 533.3M1321.8 355.5L1337.3 355.5M1321.8 360.5L1337.3 360.5M1321.8 363.5L1337.3 363.5M1321.8 380.5L1337.3 380.5M1321.8 384.5L1337.3 384.5M1321.8 404.5L1337.3 404.5M1323.3 365.5L1335.8 365.5M1323.3 379.5L1335.8 379.5M1323.5 365L1323.5 379.7M1335.5 365L1335.5 379.7M1369.5 340.5L1369.5 343.3M1353.5 370L1353.5 412M1386.5 370L1386.5 412M1337.3 372.5L1353.5 372.5M1386 372.5L1402.3 372.5M1160.8 412.5L1402.3 412.5M1160.8 421.5L1402.3 421.5M1160.8 437.5L1402.3 437.5M1160.8 469.5L1402.3 469.5M1225.5 412L1225.5 421.3M1273.5 412L1273.5 469.5M1289.5 412L1289.5 469.5M1176.7 469.5L1240.8 469.5M1176.7 471.5L1240.8 471.5M1180.5 481.9L1180.5 518.3M1203.5 481.9L1203.5 518.3M1176.5 469.5L1176.5 518.3M1186.5 489.3L1186.5 518.3M1194.5 489.3L1194.5 518.3M1176.7 494.5L1186.3 494.5M1194.6 494.5L1208.8 494.5M1179.4 473.5L1181.2 473.5M1184.7 473.5L1186.6 473.5M1190.1 473.5L1191.9 473.5M1195.4 473.5L1197.3 473.5M1200.7 473.5L1202.6 473.5M1206.1 473.5L1207.9 473.5M1176.7 476.5L1208.8 476.5M1212.5 481.9L1212.5 518.3M1235.5 481.9L1235.5 518.3M1208.5 469.5L1208.5 518.3M1218.5 489.3L1218.5 518.3M1226.5 489.3L1226.5 518.3M1208.8 494.5L1218.4 494.5M1226.7 494.5L1240.8 494.5M1211.4 473.5L1213.3 473.5M1216.8 473.5L1218.6 473.5M1222.1 473.5L1224 473.5M1227.4 473.5L1229.3 473.5M1232.8 473.5L1234.7 473.5M1238.1 473.5L1240 473.5M1208.8 476.5L1240.8 476.5M1240.5 469.5L1240.5 518.3M1181.5 494.2L1181.5 533.3M1185.5 480L1185.5 533.3M1190.5 494.2L1190.5 533.3M1195.5 480L1195.5 533.3M1199.5 494.2L1199.5 533.3M1204.5 480L1204.5 533.3M1208.5 494.2L1208.5 533.3M1213.5 480L1213.5 533.3M1217.5 494.2L1217.5 533.3M1222.5 480L1222.5 533.3M1227.5 494.2L1227.5 533.3M1231.5 480L1231.5 533.3M1236.5 494.2L1236.5 533.3M1176.7 518.5L1240.8 518.5M1257.5 469.5L1321.3 469.5M1257.5 471.5L1321.3 471.5M1260.5 481.9L1260.5 518.3M1284.5 481.9L1284.5 518.3M1257.5 469.5L1257.5 518.3M1267.5 489.3L1267.5 518.3M1275.5 489.3L1275.5 518.3M1257.5 494.5L1267.1 494.5M1275.4 494.5L1289.4 494.5M1260.2 473.5L1262 473.5M1265.5 473.5L1267.3 473.5M1270.8 473.5L1272.7 473.5M1276.1 473.5L1278 473.5M1281.4 473.5L1283.3 473.5M1286.7 473.5L1288.6 473.5M1257.5 476.5L1289.4 476.5M1292.5 481.9L1292.5 518.3M1316.5 481.9L1316.5 518.3M1289.5 469.5L1289.5 518.3M1298.5 489.3L1298.5 518.3M1307.5 489.3L1307.5 518.3M1289.4 494.5L1299 494.5M1307.3 494.5L1321.3 494.5M1292.1 473.5L1293.9 473.5M1297.4 473.5L1299.2 473.5M1302.7 473.5L1304.6 473.5M1308 473.5L1309.9 473.5M1313.3 473.5L1315.2 473.5M1318.6 473.5L1320.5 473.5M1289.4 476.5L1321.3 476.5M1321.5 469.5L1321.5 518.3M1262.5 494.2L1262.5 533.3M1266.5 480L1266.5 533.3M1271.5 494.2L1271.5 533.3M1275.5 480L1275.5 533.3M1280.5 494.2L1280.5 533.3M1284.5 480L1284.5 533.3M1289.5 494.2L1289.5 533.3M1293.5 480L1293.5 533.3M1298.5 494.2L1298.5 533.3M1303.5 480L1303.5 533.3M1307.5 494.2L1307.5 533.3M1312.5 480L1312.5 533.3M1316.5 494.2L1316.5 533.3M1257.5 518.5L1321.3 518.5M1338.7 469.5L1402 469.5M1338.7 471.5L1402 471.5M1342.5 481.9L1342.5 518.3M1365.5 481.9L1365.5 518.3M1338.5 469.5L1338.5 518.3M1348.5 489.3L1348.5 518.3M1356.5 489.3L1356.5 518.3M1338.7 494.5L1348.2 494.5M1356.4 494.5L1370.3 494.5M1341.3 473.5L1343.2 473.5M1346.6 473.5L1348.5 473.5M1351.9 473.5L1353.7 473.5M1357.2 473.5L1359 473.5M1362.4 473.5L1364.3 473.5M1367.7 473.5L1369.6 473.5M1338.7 476.5L1370.3 476.5M1373.5 481.9L1373.5 518.3M1396.5 481.9L1396.5 518.3M1370.5 469.5L1370.5 518.3M1379.5 489.3L1379.5 518.3M1388.5 489.3L1388.5 518.3M1370.3 494.5L1379.8 494.5M1388.1 494.5L1402 494.5M1373 473.5L1374.8 473.5M1378.3 473.5L1380.1 473.5M1383.5 473.5L1385.4 473.5M1388.8 473.5L1390.7 473.5M1394.1 473.5L1395.9 473.5M1399.4 473.5L1401.2 473.5M1370.3 476.5L1402 476.5M1402.5 469.5L1402.5 518.3M1343.5 494.2L1343.5 533.3M1347.5 480L1347.5 533.3M1352.5 494.2L1352.5 533.3M1356.5 480L1356.5 533.3M1361.5 494.2L1361.5 533.3M1365.5 480L1365.5 533.3M1370.5 494.2L1370.5 533.3M1374.5 480L1374.5 533.3M1379.5 494.2L1379.5 533.3M1383.5 480L1383.5 533.3M1388.5 494.2L1388.5 533.3M1392.5 480L1392.5 533.3M1397.5 494.2L1397.5 533.3M1338.7 518.5L1402 518.5M1160.8 477.5L1176.7 477.5M1160.8 485.5L1402.3 485.5M1402.3 356.5L1475.4 356.5M1402.3 358.5L1475.4 358.5M1404.5 368.8L1404.5 405.7M1422.5 368.8L1422.5 405.7M1402.5 356.8L1402.5 405.7M1409.5 376L1409.5 405.7M1415.5 376L1415.5 405.7M1402.3 380.5L1409.6 380.5M1415.9 380.5L1426.7 380.5M1404.3 360.5L1405.8 360.5M1408.4 360.5L1409.8 360.5M1412.5 360.5L1413.9 360.5M1416.5 360.5L1417.9 360.5M1420.6 360.5L1422 360.5M1424.6 360.5L1426.1 360.5M1402.3 364.5L1426.7 364.5M1429.5 368.8L1429.5 405.7M1447.5 368.8L1447.5 405.7M1426.5 356.8L1426.5 405.7M1433.5 376L1433.5 405.7M1440.5 376L1440.5 405.7M1426.7 380.5L1434 380.5M1440.3 380.5L1451 380.5M1428.7 360.5L1430.1 360.5M1432.8 360.5L1434.2 360.5M1436.8 360.5L1438.2 360.5M1440.9 360.5L1442.3 360.5M1444.9 360.5L1446.4 360.5M1449 360.5L1450.4 360.5M1426.7 364.5L1451 364.5M1453.5 368.8L1453.5 405.7M1471.5 368.8L1471.5 405.7M1451.5 356.8L1451.5 405.7M1458.5 376L1458.5 405.7M1464.5 376L1464.5 405.7M1451 380.5L1458.3 380.5M1464.7 380.5L1475.4 380.5M1453.1 360.5L1454.5 360.5M1457.1 360.5L1458.5 360.5M1461.2 360.5L1462.6 360.5M1465.2 360.5L1466.7 360.5M1469.3 360.5L1470.7 360.5M1473.4 360.5L1474.8 360.5M1451 364.5L1475.4 364.5M1475.5 356.8L1475.5 405.7M1406.5 372L1406.5 421M1410.5 372L1410.5 421M1414.5 372L1414.5 421M1418.5 372L1418.5 421M1422.5 372L1422.5 421M1426.5 372L1426.5 421M1430.5 372L1430.5 421M1434.5 372L1434.5 421M1438.5 372L1438.5 421M1442.5 372L1442.5 421M1446.5 372L1446.5 421M1451.5 372L1451.5 421M1455.5 372L1455.5 421M1459.5 372L1459.5 421M1463.5 372L1463.5 421M1467.5 372L1467.5 421M1471.5 372L1471.5 421M1402.3 405.5L1499.8 405.5M1402.3 421.5L1499.8 421.5M1467.1 411.5L1483.3 411.5M1467.1 416.5L1483.3 416.5M1467.1 425.5L1483.3 425.5M1402.3 438.5L1491.4 438.5M1402.3 439.5L1491.4 439.5M1405.5 450.8L1405.5 517M1427.5 450.8L1427.5 517M1402.5 438.3L1402.5 517M1411.5 458.3L1411.5 517M1418.5 458.3L1418.5 517M1402.3 463.5L1411.2 463.5M1418.9 463.5L1432 463.5M1404.8 441.5L1406.5 441.5M1409.7 441.5L1411.5 441.5M1414.7 441.5L1416.4 441.5M1419.6 441.5L1421.4 441.5M1424.6 441.5L1426.3 441.5M1429.5 441.5L1431.3 441.5M1402.3 445.5L1432 445.5M1435.5 450.8L1435.5 517M1456.5 450.8L1456.5 517M1432.5 438.3L1432.5 517M1440.5 458.3L1440.5 517M1448.5 458.3L1448.5 517M1432 463.5L1440.9 463.5M1448.6 463.5L1461.7 463.5M1434.5 441.5L1436.2 441.5M1439.4 441.5L1441.2 441.5M1444.4 441.5L1446.1 441.5M1449.3 441.5L1451.1 441.5M1454.3 441.5L1456 441.5M1459.2 441.5L1461 441.5M1432 445.5L1461.7 445.5M1464.5 450.8L1464.5 517M1486.5 450.8L1486.5 517M1461.5 438.3L1461.5 517M1470.5 458.3L1470.5 517M1478.5 458.3L1478.5 517M1461.7 463.5L1470.6 463.5M1478.3 463.5L1491.4 463.5M1464.2 441.5L1465.9 441.5M1469.1 441.5L1470.9 441.5M1474.1 441.5L1475.8 441.5M1479 441.5L1480.8 441.5M1484 441.5L1485.7 441.5M1488.9 441.5L1490.7 441.5M1461.7 445.5L1491.4 445.5M1491.5 438.3L1491.5 517M1407.5 463.3L1407.5 533.3M1413.5 463.3L1413.5 533.3M1419.5 450L1419.5 533.3M1424.5 463.3L1424.5 533.3M1430.5 463.3L1430.5 533.3M1435.5 450L1435.5 533.3M1441.5 463.3L1441.5 533.3M1446.5 463.3L1446.5 533.3M1452.5 450L1452.5 533.3M1457.5 463.3L1457.5 533.3M1463.5 463.3L1463.5 533.3M1469.5 450L1469.5 533.3M1474.5 463.3L1474.5 533.3M1480.5 463.3L1480.5 533.3M1485.5 450L1485.5 533.3M1402.3 463.5L1499.8 463.5M1402.3 517.5L1499.8 517.5M1467.1 477.5L1483.3 477.5M1160.8 533.5L1499.8 533.5M1096.3 533.5L1563.7 533.5M1096.3 550.5L1563.7 550.5M1096.5 533.3L1096.5 550.5M1563.5 533.3L1563.5 550.5" fill="none" stroke="#fff" stroke-width="1"/><path d="M1405 130.4L1410.4 115.4M1410.4 115.4L1416 130.4M1477.5 130.4L1483.1 115.4M1483.1 115.4L1489 130.4M1475 203.5 L1474.8 199.3 L1474 195.1 L1472.9 191.1 L1471.2 187.3 L1469.2 183.8 L1466.8 180.7 L1464 177.9 L1461 175.5 L1457.7 173.7 L1454.2 172.3 L1450.6 171.5 L1446.9 171.2 L1443.2 171.5 L1439.6 172.3 L1436.1 173.7 L1432.9 175.5 L1429.8 177.9 L1427 180.7 L1424.6 183.8 L1422.6 187.3 L1420.9 191.1 L1419.8 195.1 L1419 199.3 L1418.8 203.5 L1419 207.7 L1419.8 211.9 L1420.9 215.9 L1422.6 219.7 L1424.6 223.2 L1427 226.3 L1429.8 229.1 L1432.9 231.5 L1436.1 233.3 L1439.6 234.7 L1443.2 235.5 L1446.9 235.8 L1450.6 235.5 L1454.2 234.7 L1457.7 233.3 L1461 231.5 L1464 229.1 L1466.8 226.3 L1469.2 223.2 L1471.2 219.7 L1472.9 215.9 L1474 211.9 L1474.8 207.7 L1475 203.5M1445 235.3 L1448.7 235.7 L1452.5 235.7 L1456.2 235.3 L1459.9 234.4 L1463.4 233.2 L1466.8 231.5 L1469.9 229.4 L1472.8 227 L1475.3 224.3 L1477.6 221.2 L1479.5 218 L1481 214.5 L1482 210.9 L1482.7 207.2 L1482.9 203.5 L1482.7 199.8 L1482 196.1 L1481 192.5 L1479.5 189 L1477.6 185.8 L1475.3 182.7 L1472.8 180 L1469.9 177.6 L1466.8 175.5 L1463.4 173.8 L1459.9 172.6 L1456.2 171.7 L1452.5 171.3 L1448.7 171.3 L1445 171.7M1410.4 162.5L1427 181M1410.4 243.3L1427 226.5M1491.4 162.5L1470 181.5M1483.3 162.5L1466 180M1491.4 243.3L1470 226M1483.3 243.3L1468 228M1475 291.7 L1474.8 287.9 L1474.2 284.2 L1473.1 280.6 L1471.7 277.2 L1470 274 L1467.9 271.2 L1465.5 268.7 L1462.8 266.6 L1459.9 264.9 L1456.9 263.7 L1453.8 262.9 L1450.6 262.7 L1447.4 262.9 L1444.3 263.7 L1441.3 264.9 L1438.4 266.6 L1435.7 268.7 L1433.3 271.2 L1431.2 274 L1429.5 277.2 L1428.1 280.6 L1427 284.2 L1426.4 287.9 L1426.2 291.7M1411.4 260.5L1433.3 270.8M1490 260.5L1468.3 270.8M1163.5 360.8L1168.5 349.2M1168.5 349.2L1173.5 360.8M1225 370 L1224.7 365.8 L1224.2 361.7 L1223.2 357.9 L1221.8 354.3 L1220.2 351.1 L1218.3 348.4 L1216.1 346.2 L1213.7 344.6 L1211.2 343.6 L1208.7 343.3 L1206.2 343.6 L1203.7 344.6 L1201.3 346.2 L1199.1 348.4 L1197.2 351.1 L1195.6 354.3 L1194.2 357.9 L1193.2 361.7 L1192.7 365.8 L1192.5 370M1177.3 341.5L1197.1 351.3M1240.3 341.5L1220.8 351.3M1244 360.8L1249 349.2M1249 349.2L1254 360.8M1305.5 370 L1305.2 365.8 L1304.7 361.7 L1303.7 357.9 L1302.3 354.3 L1300.7 351.1 L1298.8 348.4 L1296.6 346.2 L1294.2 344.6 L1291.7 343.6 L1289.2 343.3 L1286.7 343.6 L1284.2 344.6 L1281.8 346.2 L1279.6 348.4 L1277.7 351.1 L1276.1 354.3 L1274.7 357.9 L1273.7 361.7 L1273.2 365.8 L1273 370M1257.8 341.5L1277.6 351.3M1320.8 341.5L1301.3 351.3M1324.5 360.8L1329.5 349.2M1329.5 349.2L1334.5 360.8M1386 370 L1385.7 365.8 L1385.2 361.7 L1384.2 357.9 L1382.8 354.3 L1381.2 351.1 L1379.3 348.4 L1377.1 346.2 L1374.7 344.6 L1372.2 343.6 L1369.7 343.3 L1367.2 343.6 L1364.7 344.6 L1362.3 346.2 L1360.1 348.4 L1358.2 351.1 L1356.6 354.3 L1355.2 357.9 L1354.2 361.7 L1353.7 365.8 L1353.5 370M1338.3 341.5L1358.1 351.3M1401.3 341.5L1381.8 351.3M1273.8 412L1289.2 421.3M1289.2 412L1273.8 421.3M1272.4 469.5 L1272.1 464.8 L1271.4 460.1 L1270.1 455.5 L1268.3 451.1 L1266 446.9 L1263.3 442.9 L1260.2 439.2 L1256.7 435.8 L1252.9 432.9 L1248.7 430.3 L1244.3 428.1 L1239.6 426.4 L1234.9 425.2 L1230 424.4 L1225 424.2 L1220 424.4 L1215.1 425.2 L1210.4 426.4 L1205.7 428.1 L1201.3 430.3 L1197.1 432.9 L1193.3 435.8 L1189.8 439.2 L1186.7 442.9 L1184 446.9 L1181.7 451.1 L1179.9 455.5 L1178.6 460.1 L1177.9 464.8 L1177.6 469.5M1385.7 469.5 L1385.4 464.8 L1384.7 460.1 L1383.4 455.5 L1381.6 451.1 L1379.3 446.9 L1376.6 442.9 L1373.5 439.2 L1370 435.8 L1366.2 432.9 L1362 430.3 L1357.6 428.1 L1352.9 426.4 L1348.2 425.2 L1343.3 424.4 L1338.3 424.2 L1333.3 424.4 L1328.4 425.2 L1323.7 426.4 L1319 428.1 L1314.6 430.3 L1310.4 432.9 L1306.6 435.8 L1303.1 439.2 L1300 442.9 L1297.3 446.9 L1295 451.1 L1293.2 455.5 L1291.9 460.1 L1291.2 464.8 L1290.9 469.5M1160.8 412L1188.3 436.7M1289.2 412L1261.7 437.5M1273.8 412L1301.7 437.5M1402.3 412L1375 437.5M1186.3 489.3L1187.1 485.8M1187.1 485.8L1188.6 482.3M1188.6 482.3L1190.5 480.4M1190.5 480.4L1192.4 482.3M1192.4 482.3L1193.9 485.8M1193.9 485.8L1194.6 489.3M1176.7 471.1L1182 476.9M1182 476.9L1187.4 471.1M1187.4 471.1L1192.7 476.9M1192.7 476.9L1198.1 471.1M1198.1 471.1L1203.4 476.9M1203.4 476.9L1208.8 471.1M1180.1 494.2L1181 486.8M1181 486.8L1183.2 483.1M1186.3 494.2L1185.4 486.8M1185.4 486.8L1183.2 483.1M1180.1 476.9L1183.2 483.1M1186.3 476.9L1183.2 483.1M1194.6 494.2L1196 486.8M1196 486.8L1199.1 483.1M1203.5 494.2L1202.1 486.8M1202.1 486.8L1199.1 483.1M1194.6 476.9L1199.1 483.1M1203.5 476.9L1199.1 483.1M1203.5 494.2L1204.8 486.8M1204.8 486.8L1207.8 483.1M1212.1 494.2L1210.8 486.8M1210.8 486.8L1207.8 483.1M1203.5 476.9L1207.8 483.1M1212.1 476.9L1207.8 483.1M1218.4 489.3L1219.1 485.8M1219.1 485.8L1220.7 482.3M1220.7 482.3L1222.5 480.4M1222.5 480.4L1224.4 482.3M1224.4 482.3L1225.9 485.8M1225.9 485.8L1226.7 489.3M1208.8 471.1L1214.1 476.9M1214.1 476.9L1219.4 471.1M1219.4 471.1L1224.8 476.9M1224.8 476.9L1230.1 471.1M1230.1 471.1L1235.5 476.9M1235.5 476.9L1240.8 471.1M1212.1 494.2L1213.1 486.8M1213.1 486.8L1215.2 483.1M1218.4 494.2L1217.4 486.8M1217.4 486.8L1215.2 483.1M1212.1 476.9L1215.2 483.1M1218.4 476.9L1215.2 483.1M1226.7 494.2L1228 486.8M1228 486.8L1231.1 483.1M1235.5 494.2L1234.2 486.8M1234.2 486.8L1231.1 483.1M1226.7 476.9L1231.1 483.1M1235.5 476.9L1231.1 483.1M1235.5 494.2L1237.1 486.8M1237.1 486.8L1240.8 483.1M1235.5 476.9L1240.8 483.1M1267.1 489.3L1267.8 485.8M1267.8 485.8L1269.4 482.3M1269.4 482.3L1271.2 480.4M1271.2 480.4L1273.1 482.3M1273.1 482.3L1274.6 485.8M1274.6 485.8L1275.4 489.3M1257.5 471.1L1262.8 476.9M1262.8 476.9L1268.1 471.1M1268.1 471.1L1273.5 476.9M1273.5 476.9L1278.8 471.1M1278.8 471.1L1284.1 476.9M1284.1 476.9L1289.4 471.1M1260.8 494.2L1261.8 486.8M1261.8 486.8L1264 483.1M1267.1 494.2L1266.1 486.8M1266.1 486.8L1264 483.1M1260.8 476.9L1264 483.1M1267.1 476.9L1264 483.1M1275.4 494.2L1276.7 486.8M1276.7 486.8L1279.8 483.1M1284.1 494.2L1282.8 486.8M1282.8 486.8L1279.8 483.1M1275.4 476.9L1279.8 483.1M1284.1 476.9L1279.8 483.1M1284.1 494.2L1285.4 486.8M1285.4 486.8L1288.4 483.1M1292.7 494.2L1291.5 486.8M1291.5 486.8L1288.4 483.1M1284.1 476.9L1288.4 483.1M1292.7 476.9L1288.4 483.1M1299 489.3L1299.7 485.8M1299.7 485.8L1301.3 482.3M1301.3 482.3L1303.1 480.4M1303.1 480.4L1305 482.3M1305 482.3L1306.5 485.8M1306.5 485.8L1307.3 489.3M1289.4 471.1L1294.7 476.9M1294.7 476.9L1300 471.1M1300 471.1L1305.4 476.9M1305.4 476.9L1310.7 471.1M1310.7 471.1L1316 476.9M1316 476.9L1321.3 471.1M1292.7 494.2L1293.7 486.8M1293.7 486.8L1295.9 483.1M1299 494.2L1298 486.8M1298 486.8L1295.9 483.1M1292.7 476.9L1295.9 483.1M1299 476.9L1295.9 483.1M1307.3 494.2L1308.6 486.8M1308.6 486.8L1311.7 483.1M1316 494.2L1314.7 486.8M1314.7 486.8L1311.7 483.1M1307.3 476.9L1311.7 483.1M1316 476.9L1311.7 483.1M1316 494.2L1317.6 486.8M1317.6 486.8L1321.3 483.1M1316 476.9L1321.3 483.1M1348.2 489.3L1348.9 485.8M1348.9 485.8L1350.5 482.3M1350.5 482.3L1352.3 480.4M1352.3 480.4L1354.2 482.3M1354.2 482.3L1355.7 485.8M1355.7 485.8L1356.4 489.3M1338.7 471.1L1344 476.9M1344 476.9L1349.2 471.1M1349.2 471.1L1354.5 476.9M1354.5 476.9L1359.8 471.1M1359.8 471.1L1365.1 476.9M1365.1 476.9L1370.3 471.1M1342 494.2L1342.9 486.8M1342.9 486.8L1345.1 483.1M1348.2 494.2L1347.3 486.8M1347.3 486.8L1345.1 483.1M1342 476.9L1345.1 483.1M1348.2 476.9L1345.1 483.1M1356.4 494.2L1357.7 486.8M1357.7 486.8L1360.8 483.1M1365.1 494.2L1363.8 486.8M1363.8 486.8L1360.8 483.1M1356.4 476.9L1360.8 483.1M1365.1 476.9L1360.8 483.1M1365.1 494.2L1366.4 486.8M1366.4 486.8L1369.4 483.1M1373.7 494.2L1372.4 486.8M1372.4 486.8L1369.4 483.1M1365.1 476.9L1369.4 483.1M1373.7 476.9L1369.4 483.1M1379.8 489.3L1380.6 485.8M1380.6 485.8L1382.1 482.3M1382.1 482.3L1384 480.4M1384 480.4L1385.8 482.3M1385.8 482.3L1387.3 485.8M1387.3 485.8L1388.1 489.3M1370.3 471.1L1375.6 476.9M1375.6 476.9L1380.9 471.1M1380.9 471.1L1386.2 476.9M1386.2 476.9L1391.4 471.1M1391.4 471.1L1396.7 476.9M1396.7 476.9L1402 471.1M1373.7 494.2L1374.6 486.8M1374.6 486.8L1376.8 483.1M1379.8 494.2L1378.9 486.8M1378.9 486.8L1376.8 483.1M1373.7 476.9L1376.8 483.1M1379.8 476.9L1376.8 483.1M1388.1 494.2L1389.4 486.8M1389.4 486.8L1392.4 483.1M1396.8 494.2L1395.5 486.8M1395.5 486.8L1392.4 483.1M1388.1 476.9L1392.4 483.1M1396.8 476.9L1392.4 483.1M1396.8 494.2L1398.3 486.8M1398.3 486.8L1402 483.1M1396.8 476.9L1402 483.1M1409.6 376L1410.2 372.6M1410.2 372.6L1411.4 369.3M1411.4 369.3L1412.8 367.4M1412.8 367.4L1414.2 369.3M1414.2 369.3L1415.4 372.6M1415.4 372.6L1415.9 376M1402.3 358.4L1406.4 364M1406.4 364L1410.4 358.4M1410.4 358.4L1414.5 364M1414.5 364L1418.5 358.4M1418.5 358.4L1422.6 364M1422.6 364L1426.7 358.4M1404.9 380.8L1405.6 373.6M1405.6 373.6L1407.2 370M1409.6 380.8L1408.9 373.6M1408.9 373.6L1407.2 370M1404.9 364L1407.2 370M1409.6 364L1407.2 370M1415.9 380.8L1417 373.6M1417 373.6L1419.3 370M1422.6 380.8L1421.6 373.6M1421.6 373.6L1419.3 370M1415.9 364L1419.3 370M1422.6 364L1419.3 370M1422.6 380.8L1423.6 373.6M1423.6 373.6L1425.9 370M1429.2 380.8L1428.2 373.6M1428.2 373.6L1425.9 370M1422.6 364L1425.9 370M1429.2 364L1425.9 370M1434 376L1434.5 372.6M1434.5 372.6L1435.7 369.3M1435.7 369.3L1437.1 367.4M1437.1 367.4L1438.6 369.3M1438.6 369.3L1439.7 372.6M1439.7 372.6L1440.3 376M1426.7 358.4L1430.7 364M1430.7 364L1434.8 358.4M1434.8 358.4L1438.9 364M1438.9 364L1442.9 358.4M1442.9 358.4L1447 364M1447 364L1451 358.4M1429.2 380.8L1429.9 373.6M1429.9 373.6L1431.6 370M1434 380.8L1433.3 373.6M1433.3 373.6L1431.6 370M1429.2 364L1431.6 370M1434 364L1431.6 370M1440.3 380.8L1441.3 373.6M1441.3 373.6L1443.7 370M1447 380.8L1446 373.6M1446 373.6L1443.7 370M1440.3 364L1443.7 370M1447 364L1443.7 370M1447 380.8L1448 373.6M1448 373.6L1450.3 370M1453.6 380.8L1452.6 373.6M1452.6 373.6L1450.3 370M1447 364L1450.3 370M1453.6 364L1450.3 370M1458.3 376L1458.9 372.6M1458.9 372.6L1460.1 369.3M1460.1 369.3L1461.5 367.4M1461.5 367.4L1462.9 369.3M1462.9 369.3L1464.1 372.6M1464.1 372.6L1464.7 376M1451 358.4L1455.1 364M1455.1 364L1459.2 358.4M1459.2 358.4L1463.2 364M1463.2 364L1467.3 358.4M1467.3 358.4L1471.3 364M1471.3 364L1475.4 358.4M1453.6 380.8L1454.3 373.6M1454.3 373.6L1456 370M1458.3 380.8L1457.6 373.6M1457.6 373.6L1456 370M1453.6 364L1456 370M1458.3 364L1456 370M1464.7 380.8L1465.7 373.6M1465.7 373.6L1468 370M1471.4 380.8L1470.4 373.6M1470.4 373.6L1468 370M1464.7 364L1468 370M1471.4 364L1468 370M1471.4 380.8L1472.6 373.6M1472.6 373.6L1475.4 370M1471.4 364L1475.4 370M1411.2 458.3L1411.9 454.8M1411.9 454.8L1413.3 451.3M1413.3 451.3L1415.1 449.3M1415.1 449.3L1416.8 451.3M1416.8 451.3L1418.2 454.8M1418.2 454.8L1418.9 458.3M1402.3 439.9L1407.2 445.8M1407.2 445.8L1412.2 439.9M1412.2 439.9L1417.2 445.8M1417.2 445.8L1422.1 439.9M1422.1 439.9L1427 445.8M1427 445.8L1432 439.9M1405.4 463.3L1406.3 455.8M1406.3 455.8L1408.3 452.1M1411.2 463.3L1410.3 455.8M1410.3 455.8L1408.3 452.1M1405.4 445.8L1408.3 452.1M1411.2 445.8L1408.3 452.1M1418.9 463.3L1420.2 455.8M1420.2 455.8L1423 452.1M1427.1 463.3L1425.9 455.8M1425.9 455.8L1423 452.1M1418.9 445.8L1423 452.1M1427.1 445.8L1423 452.1M1427.1 463.3L1428.3 455.8M1428.3 455.8L1431.1 452.1M1435.1 463.3L1433.9 455.8M1433.9 455.8L1431.1 452.1M1427.1 445.8L1431.1 452.1M1435.1 445.8L1431.1 452.1M1440.9 458.3L1441.6 454.8M1441.6 454.8L1443 451.3M1443 451.3L1444.8 449.3M1444.8 449.3L1446.5 451.3M1446.5 451.3L1447.9 454.8M1447.9 454.8L1448.6 458.3M1432 439.9L1437 445.8M1437 445.8L1441.9 439.9M1441.9 439.9L1446.8 445.8M1446.8 445.8L1451.8 439.9M1451.8 439.9L1456.8 445.8M1456.8 445.8L1461.7 439.9M1435.1 463.3L1436 455.8M1436 455.8L1438 452.1M1440.9 463.3L1440 455.8M1440 455.8L1438 452.1M1435.1 445.8L1438 452.1M1440.9 445.8L1438 452.1M1448.6 463.3L1449.9 455.8M1449.9 455.8L1452.7 452.1M1456.8 463.3L1455.6 455.8M1455.6 455.8L1452.7 452.1M1448.6 445.8L1452.7 452.1M1456.8 445.8L1452.7 452.1M1456.8 463.3L1458 455.8M1458 455.8L1460.8 452.1M1464.8 463.3L1463.6 455.8M1463.6 455.8L1460.8 452.1M1456.8 445.8L1460.8 452.1M1464.8 445.8L1460.8 452.1M1470.6 458.3L1471.3 454.8M1471.3 454.8L1472.7 451.3M1472.7 451.3L1474.5 449.3M1474.5 449.3L1476.2 451.3M1476.2 451.3L1477.6 454.8M1477.6 454.8L1478.3 458.3M1461.7 439.9L1466.7 445.8M1466.7 445.8L1471.6 439.9M1471.6 439.9L1476.6 445.8M1476.6 445.8L1481.5 439.9M1481.5 439.9L1486.5 445.8M1486.5 445.8L1491.4 439.9M1464.8 463.3L1465.7 455.8M1465.7 455.8L1467.7 452.1M1470.6 463.3L1469.7 455.8M1469.7 455.8L1467.7 452.1M1464.8 445.8L1467.7 452.1M1470.6 445.8L1467.7 452.1M1478.3 463.3L1479.6 455.8M1479.6 455.8L1482.4 452.1M1486.5 463.3L1485.3 455.8M1485.3 455.8L1482.4 452.1M1478.3 445.8L1482.4 452.1M1486.5 445.8L1482.4 452.1M1486.5 463.3L1488 455.8M1488 455.8L1491.4 452.1M1486.5 445.8L1491.4 452.1M1476 362L1483 358M1492 362L1499.5 358M1476 366L1483 362M1492 366L1499.5 362M1492 444L1499.5 440M1492 451L1499.5 447" fill="none" stroke="#fff" stroke-width="0.990"/><path d="M1184.8 476.9 L1187.8 476.9 L1186.7 490.3 L1185.9 490.3ZM1193.1 476.9 L1196.1 476.9 L1195 490.3 L1194.2 490.3ZM1179.1 476.9 L1181.1 476.9 L1180.1 487.3ZM1202.5 476.9 L1204.5 476.9 L1203.5 487.3ZM1216.9 476.9 L1219.9 476.9 L1218.8 490.3 L1218 490.3ZM1225.2 476.9 L1228.2 476.9 L1227.1 490.3 L1226.3 490.3ZM1211.1 476.9 L1213.1 476.9 L1212.1 487.3ZM1234.5 476.9 L1236.5 476.9 L1235.5 487.3ZM1265.6 476.9 L1268.6 476.9 L1267.5 490.3 L1266.7 490.3ZM1273.9 476.9 L1276.9 476.9 L1275.8 490.3 L1275 490.3ZM1259.8 476.9 L1261.8 476.9 L1260.8 487.3ZM1283.1 476.9 L1285.1 476.9 L1284.1 487.3ZM1297.5 476.9 L1300.5 476.9 L1299.4 490.3 L1298.6 490.3ZM1305.8 476.9 L1308.8 476.9 L1307.7 490.3 L1306.9 490.3ZM1291.7 476.9 L1293.7 476.9 L1292.7 487.3ZM1315 476.9 L1317 476.9 L1316 487.3ZM1346.7 476.9 L1349.7 476.9 L1348.6 490.3 L1347.8 490.3ZM1354.9 476.9 L1357.9 476.9 L1356.8 490.3 L1356 490.3ZM1341 476.9 L1343 476.9 L1342 487.3ZM1364.1 476.9 L1366.1 476.9 L1365.1 487.3ZM1378.3 476.9 L1381.3 476.9 L1380.2 490.3 L1379.4 490.3ZM1386.6 476.9 L1389.6 476.9 L1388.5 490.3 L1387.7 490.3ZM1372.7 476.9 L1374.7 476.9 L1373.7 487.3ZM1395.8 476.9 L1397.8 476.9 L1396.8 487.3ZM1408.1 364 L1411.1 364 L1410 377 L1409.2 377ZM1414.4 364 L1417.4 364 L1416.3 377 L1415.5 377ZM1403.9 364 L1405.9 364 L1404.9 374.1ZM1421.6 364 L1423.6 364 L1422.6 374.1ZM1432.5 364 L1435.5 364 L1434.4 377 L1433.6 377ZM1438.8 364 L1441.8 364 L1440.7 377 L1439.9 377ZM1428.2 364 L1430.2 364 L1429.2 374.1ZM1446 364 L1448 364 L1447 374.1ZM1456.8 364 L1459.8 364 L1458.7 377 L1457.9 377ZM1463.2 364 L1466.2 364 L1465.1 377 L1464.3 377ZM1452.6 364 L1454.6 364 L1453.6 374.1ZM1470.4 364 L1472.4 364 L1471.4 374.1ZM1409.7 445.8 L1412.7 445.8 L1411.6 459.3 L1410.8 459.3ZM1417.4 445.8 L1420.4 445.8 L1419.3 459.3 L1418.5 459.3ZM1404.4 445.8 L1406.4 445.8 L1405.4 456.3ZM1426.1 445.8 L1428.1 445.8 L1427.1 456.3ZM1439.4 445.8 L1442.4 445.8 L1441.3 459.3 L1440.5 459.3ZM1447.1 445.8 L1450.1 445.8 L1449 459.3 L1448.2 459.3ZM1434.1 445.8 L1436.1 445.8 L1435.1 456.3ZM1455.8 445.8 L1457.8 445.8 L1456.8 456.3ZM1469.1 445.8 L1472.1 445.8 L1471 459.3 L1470.2 459.3ZM1476.8 445.8 L1479.8 445.8 L1478.7 459.3 L1477.9 459.3ZM1463.8 445.8 L1465.8 445.8 L1464.8 456.3ZM1485.5 445.8 L1487.5 445.8 L1486.5 456.3Z" fill="#fff" stroke="none"/></svg>
<svg style="left:0;top:0" width="1920" height="1200" viewBox="0 0 1920 1200" shape-rendering="crispEdges"><path d="M370.5 657.5L370.5 1084.5M391.5 657.5L391.5 1084.5M412.5 657.5L412.5 1084.5M434.5 657.5L434.5 1084.5M455.5 657.5L455.5 1084.5M476.5 657.5L476.5 1084.5M498.5 657.5L498.5 1084.5M519.5 657.5L519.5 1084.5M540.5 657.5L540.5 1084.5M562.5 657.5L562.5 1084.5M583.5 657.5L583.5 1084.5M605.5 657.5L605.5 1084.5M626.5 657.5L626.5 1084.5M647.5 657.5L647.5 1084.5M669.5 657.5L669.5 1084.5M690.5 657.5L690.5 1084.5M711.5 657.5L711.5 1084.5M733.5 657.5L733.5 1084.5M754.5 657.5L754.5 1084.5M776.5 657.5L776.5 1084.5M797.5 657.5L797.5 1084.5M370 657.5L797.4 657.5M370 678.5L797.4 678.5M370 700.5L797.4 700.5M370 721.5L797.4 721.5M370 742.5L797.4 742.5M370 764.5L797.4 764.5M370 785.5L797.4 785.5M370 806.5L797.4 806.5M370 828.5L797.4 828.5M370 849.5L797.4 849.5M370 870.5L797.4 870.5M370 892.5L797.4 892.5M370 913.5L797.4 913.5M370 934.5L797.4 934.5M370 956.5L797.4 956.5M370 977.5L797.4 977.5M370 998.5L797.4 998.5M370 1020.5L797.4 1020.5M370 1041.5L797.4 1041.5M370 1062.5L797.4 1062.5M370 1084.5L797.4 1084.5" fill="none" stroke="#5a5a5a" stroke-width="1"/><path d="M348.5 636.5L498.4 636.5M818.9 636.5L669 636.5M348.5 657.5L498.4 657.5M818.9 657.5L669 657.5M348.5 636.5L348.5 657.5M818.5 636.5L818.5 657.5M498.5 636.5L498.5 657.5M668.5 636.5L668.5 657.5M359.5 636.5L359.5 657.5M807.5 636.5L807.5 657.5M380.5 636.5L380.5 657.5M786.5 636.5L786.5 657.5M394.5 636.5L394.5 657.5M772.5 636.5L772.5 657.5M428.5 636.5L428.5 657.5M738.5 636.5L738.5 657.5M462.5 636.5L462.5 657.5M704.5 636.5L704.5 657.5M476.5 636.5L476.5 657.5M690.5 636.5L690.5 657.5M498.4 636.5L583.7 636.5M669 636.5L583.7 636.5M498.4 657.5L583.7 657.5M669 657.5L583.7 657.5M348.5 742.5L498.4 742.5M818.9 742.5L669 742.5M348.5 764.5L498.4 764.5M818.9 764.5L669 764.5M348.5 742.2L348.5 764.4M818.5 742.2L818.5 764.4M498.5 742.2L498.5 764.4M668.5 742.2L668.5 764.4M359.5 742.2L359.5 764.4M807.5 742.2L807.5 764.4M380.5 742.2L380.5 764.4M786.5 742.2L786.5 764.4M394.5 742.2L394.5 764.4M772.5 742.2L772.5 764.4M428.5 742.2L428.5 764.4M738.5 742.2L738.5 764.4M462.5 742.2L462.5 764.4M704.5 742.2L704.5 764.4M476.5 742.2L476.5 764.4M690.5 742.2L690.5 764.4M348.5 849.5L498.4 849.5M818.9 849.5L669 849.5M348.5 870.5L498.4 870.5M818.9 870.5L669 870.5M348.5 849.7L348.5 870.7M818.5 849.7L818.5 870.7M498.5 849.7L498.5 870.7M668.5 849.7L668.5 870.7M359.5 849.7L359.5 870.7M807.5 849.7L807.5 870.7M380.5 849.7L380.5 870.7M786.5 849.7L786.5 870.7M394.5 849.7L394.5 870.7M772.5 849.7L772.5 870.7M428.5 849.7L428.5 870.7M738.5 849.7L738.5 870.7M462.5 849.7L462.5 870.7M704.5 849.7L704.5 870.7M476.5 849.7L476.5 870.7M690.5 849.7L690.5 870.7M583.5 636.5L583.5 956.5M476.5 636.5L476.5 1062M690.5 636.5L690.5 1062M498.5 636.5L498.5 1062M668.5 636.5L668.5 1062M476.6 676.5L498.4 676.5M690.8 676.5L669 676.5M476.6 678.5L498.4 678.5M690.8 678.5L669 678.5M476.6 685.5L498.4 685.5M690.8 685.5L669 685.5M476.6 700.5L498.4 700.5M690.8 700.5L669 700.5M476.6 715.5L498.4 715.5M690.8 715.5L669 715.5M476.6 721.5L498.4 721.5M690.8 721.5L669 721.5M476.6 783.5L498.4 783.5M690.8 783.5L669 783.5M476.6 785.5L498.4 785.5M690.8 785.5L669 785.5M476.6 792.5L498.4 792.5M690.8 792.5L669 792.5M476.6 807.5L498.4 807.5M690.8 807.5L669 807.5M476.6 822.5L498.4 822.5M690.8 822.5L669 822.5M476.6 828.5L498.4 828.5M690.8 828.5L669 828.5M476.6 889.5L498.4 889.5M690.8 889.5L669 889.5M476.6 891.5L498.4 891.5M690.8 891.5L669 891.5M476.6 899.5L498.4 899.5M690.8 899.5L669 899.5M476.6 913.5L498.4 913.5M690.8 913.5L669 913.5M476.6 928.5L498.4 928.5M690.8 928.5L669 928.5M476.6 934.5L498.4 934.5M690.8 934.5L669 934.5M476.6 785.5L498.4 785.5M690.8 785.5L669 785.5M476.6 791.5L498.4 791.5M690.8 791.5L669 791.5M476.6 806.5L498.4 806.5M690.8 806.5L669 806.5M476.6 822.5L498.4 822.5M690.8 822.5L669 822.5M476.6 825.5L498.4 825.5M690.8 825.5L669 825.5M476.6 828.5L498.4 828.5M690.8 828.5L669 828.5M476.6 892.5L498.4 892.5M690.8 892.5L669 892.5M476.6 898.5L498.4 898.5M690.8 898.5L669 898.5M476.6 913.5L498.4 913.5M690.8 913.5L669 913.5M476.6 916.5L498.4 916.5M690.8 916.5L669 916.5M476.6 928.5L498.4 928.5M690.8 928.5L669 928.5M476.6 934.5L498.4 934.5M690.8 934.5L669 934.5M359.5 657.5L359.5 1073.3M807.5 657.5L807.5 1073.3M370.5 657.5L370.5 1084.5M796.5 657.5L796.5 1084.5M380.5 657.5L380.5 1073.3M786.5 657.5L786.5 1073.3M359.2 678.5L370.4 678.5M808.2 678.5L797 678.5M359.2 699.5L370.4 699.5M808.2 699.5L797 699.5M359.2 721.5L370.4 721.5M808.2 721.5L797 721.5M359.2 742.5L370.4 742.5M808.2 742.5L797 742.5M359.2 785.5L370.4 785.5M808.2 785.5L797 785.5M359.2 807.5L370.4 807.5M808.2 807.5L797 807.5M359.2 828.5L370.4 828.5M808.2 828.5L797 828.5M359.2 849.5L370.4 849.5M808.2 849.5L797 849.5M359.2 892.5L370.4 892.5M808.2 892.5L797 892.5M359.2 913.5L370.4 913.5M808.2 913.5L797 913.5M359.2 935.5L370.4 935.5M808.2 935.5L797 935.5M359.2 956.5L370.4 956.5M808.2 956.5L797 956.5M359.2 956.5L583.7 956.5M808.2 956.5L583.7 956.5M391.5 956.5L391.5 966.4M775.5 956.5L775.5 966.4M393.5 956.5L393.5 966.4M773.5 956.5L773.5 966.4M412.5 956.5L412.5 966.4M754.5 956.5L754.5 966.4M423.5 956.5L423.5 966.4M743.5 956.5L743.5 966.4M434.5 956.5L434.5 966.4M732.5 956.5L732.5 966.4M454.5 956.5L454.5 966.4M712.5 956.5L712.5 966.4M455.5 956.5L455.5 966.4M711.5 956.5L711.5 966.4M466.5 956.5L466.5 966.4M700.5 956.5L700.5 966.4M380.3 966.5L476.6 966.5M787.1 966.5L690.8 966.5M391.2 966.5L412.4 966.5M776.2 966.5L755 966.5M391.2 977.5L412.4 977.5M776.2 977.5L755 977.5M391.5 966.4L391.5 977.3M775.5 966.4L775.5 977.3M412.5 966.4L412.5 977.3M754.5 966.4L754.5 977.3M434.7 966.5L455.7 966.5M732.7 966.5L711.7 966.5M434.7 977.5L455.7 977.5M732.7 977.5L711.7 977.5M434.5 966.4L434.5 977.3M732.5 966.4L732.5 977.3M455.5 966.4L455.5 977.3M711.5 966.4L711.5 977.3M359.2 956.5L380.3 956.5M808.2 956.5L787.1 956.5M359.2 977.5L380.3 977.5M808.2 977.5L787.1 977.5M359.5 956.5L359.5 977.3M807.5 956.5L807.5 977.3M380.5 956.5L380.5 977.3M786.5 956.5L786.5 977.3M369.5 956.5L369.5 977.3M797.5 956.5L797.5 977.3M359.2 966.5L380.3 966.5M808.2 966.5L787.1 966.5M476.6 956.5L498.4 956.5M690.8 956.5L669 956.5M476.6 977.5L498.4 977.5M690.8 977.5L669 977.5M476.5 956.5L476.5 977.3M690.5 956.5L690.5 977.3M498.5 956.5L498.5 977.3M668.5 956.5L668.5 977.3M487.5 956.5L487.5 977.3M679.5 956.5L679.5 977.3M476.6 966.5L498.4 966.5M690.8 966.5L669 966.5M359.2 1052.5L380.3 1052.5M808.2 1052.5L787.1 1052.5M359.2 1073.5L380.3 1073.5M808.2 1073.5L787.1 1073.5M359.5 1052.7L359.5 1073.3M807.5 1052.7L807.5 1073.3M380.5 1052.7L380.5 1073.3M786.5 1052.7L786.5 1073.3M369.5 1052.7L369.5 1073.3M797.5 1052.7L797.5 1073.3M359.2 1063.5L380.3 1063.5M808.2 1063.5L787.1 1063.5M359.2 998.5L380.3 998.5M808.2 998.5L787.1 998.5M359.2 1020.5L380.3 1020.5M808.2 1020.5L787.1 1020.5M359.2 1041.5L380.3 1041.5M808.2 1041.5L787.1 1041.5M359.2 1052.5L380.3 1052.5M808.2 1052.5L787.1 1052.5M487.5 977.3L487.5 1062M679.5 977.3L679.5 1062M476.6 981.5L498.4 981.5M690.8 981.5L669 981.5M476.6 990.5L498.4 990.5M690.8 990.5L669 990.5M476.6 998.5L498.4 998.5M690.8 998.5L669 998.5M476.6 1009.5L498.4 1009.5M690.8 1009.5L669 1009.5M476.6 1020.5L498.4 1020.5M690.8 1020.5L669 1020.5M476.6 1029.5L498.4 1029.5M690.8 1029.5L669 1029.5M476.6 1041.5L498.4 1041.5M690.8 1041.5L669 1041.5M487.5 1023.5L498.4 1023.5M679.9 1023.5L669 1023.5M476.6 1041.5L583.7 1041.5M690.8 1041.5L583.7 1041.5M455.7 1052.5L583.7 1052.5M711.7 1052.5L583.7 1052.5M380.3 1062.5L583.7 1062.5M787.1 1062.5L583.7 1062.5M503.5 1041.3L503.5 1052.7M663.5 1041.3L663.5 1052.7M508.5 1041.3L508.5 1052.7M658.5 1041.3L658.5 1052.7M519.5 1041.3L519.5 1052.7M647.5 1041.3L647.5 1052.7M530.5 1041.3L530.5 1052.7M636.5 1041.3L636.5 1052.7M535.5 1041.3L535.5 1052.7M631.5 1041.3L631.5 1052.7M540.5 1041.3L540.5 1052.7M626.5 1041.3L626.5 1052.7M545.5 1041.3L545.5 1052.7M621.5 1041.3L621.5 1052.7M557.5 1041.3L557.5 1052.7M609.5 1041.3L609.5 1052.7M562.5 1041.3L562.5 1052.7M604.5 1041.3L604.5 1052.7M573.5 1041.3L573.5 1052.7M593.5 1041.3L593.5 1052.7M578.5 1041.3L578.5 1052.7M588.5 1041.3L588.5 1052.7M455.5 1052.7L455.5 1062M711.5 1052.7L711.5 1062M466.5 1041.3L466.5 1084.5M700.5 1041.3L700.5 1084.5M519.5 1052.7L519.5 1062M647.5 1052.7L647.5 1062M540.5 1052.7L540.5 1062M626.5 1052.7L626.5 1062M562.5 1052.7L562.5 1062M604.5 1052.7L604.5 1062M359.2 1062.5L476.6 1062.5M808.2 1062.5L690.8 1062.5M359.2 1073.5L476.6 1073.5M808.2 1073.5L690.8 1073.5M370.4 1084.5L476.6 1084.5M797 1084.5L690.8 1084.5M391.5 1062L391.5 1073.3M775.5 1062L775.5 1073.3M412.5 1062L412.5 1073.3M754.5 1062L754.5 1073.3M434.5 1062L434.5 1073.3M732.5 1062L732.5 1073.3M455.5 1062L455.5 1073.3M711.5 1062L711.5 1073.3M466.5 1062L466.5 1073.3M700.5 1062L700.5 1073.3M476.5 1062L476.5 1073.3M690.5 1062L690.5 1073.3M476.5 1062L476.5 1084.5M690.5 1062L690.5 1084.5M374.5 1073.3L374.5 1084.5M792.5 1073.3L792.5 1084.5M391.5 1073.3L391.5 1084.5M775.5 1073.3L775.5 1084.5M412.5 1073.3L412.5 1084.5M754.5 1073.3L754.5 1084.5M434.5 1073.3L434.5 1084.5M732.5 1073.3L732.5 1084.5" fill="none" stroke="#fff" stroke-width="1"/><path d="M380 647 L379.6 644.3 L378.6 641.9 L377 639.7 L374.8 638.1 L372.4 637.1 L369.7 636.7 L367 637.1 L364.6 638.1 L362.4 639.7 L360.8 641.9 L359.8 644.3 L359.4 647 L359.8 649.7 L360.8 652.1 L362.4 654.3 L364.6 655.9 L367 656.9 L369.7 657.3 L372.4 656.9 L374.8 655.9 L377 654.3 L378.6 652.1 L379.6 649.7 L380 647M787.4 647 L787.8 644.3 L788.8 641.9 L790.4 639.7 L792.6 638.1 L795 637.1 L797.7 636.7 L800.4 637.1 L802.9 638.1 L805 639.7 L806.6 641.9 L807.6 644.3 L808 647 L807.6 649.7 L806.6 652.1 L805 654.3 L802.9 655.9 L800.4 656.9 L797.7 657.3 L795 656.9 L792.6 655.9 L790.4 654.3 L788.8 652.1 L787.8 649.7 L787.4 647M362.4 639.5L377 654.5M805 639.5L790.4 654.5M377 639.5L362.4 654.5M790.4 639.5L805 654.5M380 753.3 L379.6 750.6 L378.6 748.1 L377 746 L374.8 744.4 L372.4 743.4 L369.7 743 L367 743.4 L364.6 744.4 L362.4 746 L360.8 748.1 L359.8 750.6 L359.4 753.3 L359.8 756 L360.8 758.4 L362.4 760.6 L364.6 762.2 L367 763.2 L369.7 763.6 L372.4 763.2 L374.8 762.2 L377 760.6 L378.6 758.4 L379.6 756 L380 753.3M787.4 753.3 L787.8 750.6 L788.8 748.1 L790.4 746 L792.6 744.4 L795 743.4 L797.7 743 L800.4 743.4 L802.9 744.4 L805 746 L806.6 748.1 L807.6 750.6 L808 753.3 L807.6 756 L806.6 758.4 L805 760.6 L802.9 762.2 L800.4 763.2 L797.7 763.6 L795 763.2 L792.6 762.2 L790.4 760.6 L788.8 758.4 L787.8 756 L787.4 753.3M362.4 745.2L377 761.4M805 745.2L790.4 761.4M377 745.2L362.4 761.4M790.4 745.2L805 761.4M380 860.2 L379.6 857.5 L378.6 855.1 L377 852.9 L374.8 851.3 L372.4 850.3 L369.7 849.9 L367 850.3 L364.6 851.3 L362.4 852.9 L360.8 855.1 L359.8 857.5 L359.4 860.2 L359.8 862.9 L360.8 865.4 L362.4 867.5 L364.6 869.1 L367 870.1 L369.7 870.5 L372.4 870.1 L374.8 869.1 L377 867.5 L378.6 865.4 L379.6 862.9 L380 860.2M787.4 860.2 L787.8 857.5 L788.8 855.1 L790.4 852.9 L792.6 851.3 L795 850.3 L797.7 849.9 L800.4 850.3 L802.9 851.3 L805 852.9 L806.6 855.1 L807.6 857.5 L808 860.2 L807.6 862.9 L806.6 865.4 L805 867.5 L802.9 869.1 L800.4 870.1 L797.7 870.5 L795 870.1 L792.6 869.1 L790.4 867.5 L788.8 865.4 L787.8 862.9 L787.4 860.2M362.4 852.7L377 867.7M805 852.7L790.4 867.7M377 852.7L362.4 867.7M790.4 852.7L805 867.7M359.2 663.1L370.4 664.2M808.2 663.1L797 664.2M359.2 665.1L370.4 667.7M808.2 665.1L797 667.7M359.2 669L370.4 659.5M808.2 669L797 659.5M359.2 659.7L370.4 668M808.2 659.7L797 668M359.2 663.4L370.4 659.5M808.2 663.4L797 659.5M359.2 695.8L370.4 695.1M808.2 695.8L797 695.1M359.2 693.4L370.4 692.8M808.2 693.4L797 692.8M359.2 690.4L370.4 681.8M808.2 690.4L797 681.8M359.2 690.3L370.4 695.9M808.2 690.3L797 695.9M359.2 688.6L370.4 694.6M808.2 688.6L797 694.6M359.2 712L370.4 701.9M808.2 712L797 701.9M359.2 713.4L370.4 715.6M808.2 713.4L797 715.6M359.2 706.4L370.4 701.9M808.2 706.4L797 701.9M359.2 715L370.4 714.3M808.2 715L797 714.3M359.2 712.8L370.4 717M808.2 712.8L797 717M359.2 733.9L370.4 738.2M808.2 733.9L797 738.2M359.2 729L370.4 736.4M808.2 729L797 736.4M359.2 729.8L370.4 738.2M808.2 729.8L797 738.2M359.2 736.4L370.4 726.4M808.2 736.4L797 726.4M359.2 725.1L370.4 723M808.2 725.1L797 723M359.2 781.2L370.4 779.6M808.2 781.2L797 779.6M359.2 776L370.4 771.1M808.2 776L797 771.1M359.2 774.2L370.4 771.4M808.2 774.2L797 771.4M359.2 771.8L370.4 773.9M808.2 771.8L797 773.9M359.2 775.4L370.4 781.7M808.2 775.4L797 781.7M359.2 798.2L370.4 803M808.2 798.2L797 803M359.2 800.8L370.4 803M808.2 800.8L797 803M359.2 798L370.4 789.7M808.2 798L797 789.7M359.2 800.9L370.4 803M808.2 800.9L797 803M359.2 801.6L370.4 803M808.2 801.6L797 803M359.2 820L370.4 812.9M808.2 820L797 812.9M359.2 821.8L370.4 823.6M808.2 821.8L797 823.6M359.2 813.4L370.4 809M808.2 813.4L797 809M359.2 822.1L370.4 824.4M808.2 822.1L797 824.4M359.2 810.4L370.4 817.8M808.2 810.4L797 817.8M359.2 836.7L370.4 830.4M808.2 836.7L797 830.4M359.2 834.9L370.4 841.5M808.2 834.9L797 841.5M359.2 843.8L370.4 832.5M808.2 843.8L797 832.5M359.2 839.8L370.4 830.4M808.2 839.8L797 830.4M359.2 841.4L370.4 837.2M808.2 841.4L797 837.2M359.2 886.3L370.4 888.2M808.2 886.3L797 888.2M359.2 880.5L370.4 888.2M808.2 880.5L797 888.2M359.2 877.5L370.4 872.7M808.2 877.5L797 872.7M359.2 882L370.4 872.7M808.2 882L797 872.7M359.2 875.7L370.4 873.5M808.2 875.7L797 873.5M359.2 903.6L370.4 895.1M808.2 903.6L797 895.1M359.2 894.8L370.4 903.9M808.2 894.8L797 903.9M359.2 899L370.4 909.6M808.2 899L797 909.6M359.2 908L370.4 905M808.2 908L797 905M359.2 901.3L370.4 901.8M808.2 901.3L797 901.8M359.2 925.5L370.4 927.9M808.2 925.5L797 927.9M359.2 924.2L370.4 927.2M808.2 924.2L797 927.2M359.2 930.1L370.4 930.3M808.2 930.1L797 930.3M359.2 922.3L370.4 927.7M808.2 922.3L797 927.7M359.2 919.3L370.4 915.6M808.2 919.3L797 915.6M359.2 952.2L370.4 952.5M808.2 952.2L797 952.5M359.2 945.5L370.4 937M808.2 945.5L797 937M359.2 943.5L370.4 945.4M808.2 943.5L797 945.4M359.2 937.4L370.4 940.2M808.2 937.4L797 940.2M359.2 946.8L370.4 937M808.2 946.8L797 937M359.2 956.5L380.3 977.3M808.2 956.5L787.1 977.3M380.3 956.5L359.2 977.3M787.1 956.5L808.2 977.3M380.3 966.9 L379.5 962.9 L377.2 959.5 L373.8 957.3 L369.8 956.5 L365.7 957.3 L362.3 959.5 L360 962.9 L359.2 966.9 L360 970.9 L362.3 974.3 L365.7 976.5 L369.8 977.3 L373.8 976.5 L377.2 974.3 L379.5 970.9 L380.3 966.9M787.1 966.9 L787.9 962.9 L790.2 959.5 L793.6 957.3 L797.7 956.5 L801.7 957.3 L805.1 959.5 L807.4 962.9 L808.2 966.9 L807.4 970.9 L805.1 974.3 L801.7 976.5 L797.7 977.3 L793.6 976.5 L790.2 974.3 L787.9 970.9 L787.1 966.9M359.2 969.5L369.8 968.8M808.2 969.5L797.7 968.8M359.2 970.6L369.8 967.2M808.2 970.6L797.7 967.2M359.2 971.2L369.8 976.7M808.2 971.2L797.7 976.7M359.2 957L369.8 956.5M808.2 957L797.7 956.5M359.2 970.6L369.8 977.3M808.2 970.6L797.7 977.3M359.2 961.7L369.8 960.7M808.2 961.7L797.7 960.7M359.2 968.8L369.8 964.7M808.2 968.8L797.7 964.7M359.2 964.1L369.8 959.7M808.2 964.1L797.7 959.7M359.2 964.2L369.8 966.4M808.2 964.2L797.7 966.4M362.4 956.5L359.2 977.3M805 956.5L808.2 977.3M367.3 956.5L359.2 977.3M800.1 956.5L808.2 977.3M365.2 956.5L369.8 977.3M802.2 956.5L797.7 977.3M362.5 956.5L359.2 977.3M804.9 956.5L808.2 977.3M367.7 956.5L359.2 977.3M799.7 956.5L808.2 977.3M361.2 956.5L359.2 977.3M806.2 956.5L808.2 977.3M476.6 956.5L498.4 977.3M690.8 956.5L669 977.3M498.4 956.5L476.6 977.3M669 956.5L690.8 977.3M498.4 966.9 L497.6 962.9 L495.2 959.5 L491.7 957.3 L487.5 956.5 L483.3 957.3 L479.8 959.5 L477.4 962.9 L476.6 966.9 L477.4 970.9 L479.8 974.3 L483.3 976.5 L487.5 977.3 L491.7 976.5 L495.2 974.3 L497.6 970.9 L498.4 966.9M669 966.9 L669.8 962.9 L672.2 959.5 L675.7 957.3 L679.9 956.5 L684.1 957.3 L687.6 959.5 L690 962.9 L690.8 966.9 L690 970.9 L687.6 974.3 L684.1 976.5 L679.9 977.3 L675.7 976.5 L672.2 974.3 L669.8 970.9 L669 966.9M476.6 971L487.5 961.5M690.8 971L679.9 961.5M476.6 963.2L487.5 959.2M690.8 963.2L679.9 959.2M476.6 973.8L487.5 972.4M690.8 973.8L679.9 972.4M476.6 974.3L487.5 966.4M690.8 974.3L679.9 966.4M476.6 963.5L487.5 967.1M690.8 963.5L679.9 967.1M476.6 974.9L487.5 973.7M690.8 974.9L679.9 973.7M476.6 961.2L487.5 956.5M690.8 961.2L679.9 956.5M476.6 967.5L487.5 960.1M690.8 967.5L679.9 960.1M476.6 973.3L487.5 977.3M690.8 973.3L679.9 977.3M478.6 956.5L476.6 977.3M688.8 956.5L690.8 977.3M485.4 956.5L487.5 977.3M682 956.5L679.9 977.3M485.4 956.5L478.3 977.3M682 956.5L689.1 977.3M478 956.5L476.6 977.3M689.4 956.5L690.8 977.3M485.3 956.5L476.6 977.3M682.1 956.5L690.8 977.3M480.4 956.5L476.6 977.3M687 956.5L690.8 977.3M359.2 1052.7L380.3 1073.3M808.2 1052.7L787.1 1073.3M380.3 1052.7L359.2 1073.3M787.1 1052.7L808.2 1073.3M380.3 1063 L379.5 1059.1 L377.2 1055.7 L373.8 1053.5 L369.8 1052.7 L365.7 1053.5 L362.3 1055.7 L360 1059.1 L359.2 1063 L360 1066.9 L362.3 1070.3 L365.7 1072.5 L369.8 1073.3 L373.8 1072.5 L377.2 1070.3 L379.5 1066.9 L380.3 1063M787.1 1063 L787.9 1059.1 L790.2 1055.7 L793.6 1053.5 L797.7 1052.7 L801.7 1053.5 L805.1 1055.7 L807.4 1059.1 L808.2 1063 L807.4 1066.9 L805.1 1070.3 L801.7 1072.5 L797.7 1073.3 L793.6 1072.5 L790.2 1070.3 L787.9 1066.9 L787.1 1063M359.2 1061.3L369.8 1059.2M808.2 1061.3L797.7 1059.2M359.2 1071.7L369.8 1063.7M808.2 1071.7L797.7 1063.7M359.2 1052.8L369.8 1063.1M808.2 1052.8L797.7 1063.1M359.2 1070.8L369.8 1073.3M808.2 1070.8L797.7 1073.3M359.2 1061.6L369.8 1072.1M808.2 1061.6L797.7 1072.1M359.2 1071.8L369.8 1065.4M808.2 1071.8L797.7 1065.4M359.2 1068.1L369.8 1073.3M808.2 1068.1L797.7 1073.3M359.2 1066.4L369.8 1066.8M808.2 1066.4L797.7 1066.8M359.2 1058.7L369.8 1055M808.2 1058.7L797.7 1055M361.6 1052.7L359.2 1073.3M805.8 1052.7L808.2 1073.3M365.4 1052.7L359.2 1073.3M802 1052.7L808.2 1073.3M367.7 1052.7L359.2 1073.3M799.7 1052.7L808.2 1073.3M368.7 1052.7L369.8 1073.3M798.7 1052.7L797.7 1073.3M368.9 1052.7L369.8 1073.3M798.5 1052.7L797.7 1073.3M368.7 1052.7L369.8 1073.3M798.7 1052.7L797.7 1073.3M359.2 978.6L370.4 984.6M808.2 978.6L797 984.6M359.2 981.6L370.4 978.3M808.2 981.6L797 978.3M359.2 991.2L370.4 991.8M808.2 991.2L797 991.8M359.2 986.3L370.4 997.2M808.2 986.3L797 997.2M359.2 990.2L370.4 986.3M808.2 990.2L797 986.3M359.2 983.2L370.4 992.1M808.2 983.2L797 992.1M359.2 987.6L370.4 994.5M808.2 987.6L797 994.5M359.2 985.1L370.4 978.3M808.2 985.1L797 978.3M359.2 988.7L370.4 996.5M808.2 988.7L797 996.5M361.1 977.3L370.4 998.8M806.3 977.3L797 998.8M369.5 977.3L370.4 998.8M797.9 977.3L797 998.8M368.4 977.3L359.2 998.8M799 977.3L808.2 998.8M359.2 1012L370.4 1019.3M808.2 1012L797 1019.3M359.2 1000.7L370.4 999.8M808.2 1000.7L797 999.8M359.2 1005L370.4 1005.7M808.2 1005L797 1005.7M359.2 1008L370.4 1007.4M808.2 1008L797 1007.4M359.2 1014.9L370.4 1002.7M808.2 1014.9L797 1002.7M359.2 1000.8L370.4 999.8M808.2 1000.8L797 999.8M359.2 1002.2L370.4 999.8M808.2 1002.2L797 999.8M359.2 1018.8L370.4 1019.3M808.2 1018.8L797 1019.3M359.2 1001.4L370.4 1001.5M808.2 1001.4L797 1001.5M362.7 998.8L359.2 1020.3M804.7 998.8L808.2 1020.3M363.1 998.8L370.1 1020.3M804.3 998.8L797.3 1020.3M365.8 998.8L359.2 1020.3M801.6 998.8L808.2 1020.3M359.2 1024.9L370.4 1021.3M808.2 1024.9L797 1021.3M359.2 1023.7L370.4 1025M808.2 1023.7L797 1025M359.2 1034.9L370.4 1032M808.2 1034.9L797 1032M359.2 1022.8L370.4 1021.3M808.2 1022.8L797 1021.3M359.2 1028.4L370.4 1031M808.2 1028.4L797 1031M359.2 1036.2L370.4 1033.2M808.2 1036.2L797 1033.2M359.2 1036.5L370.4 1039.6M808.2 1036.5L797 1039.6M359.2 1029.5L370.4 1026.4M808.2 1029.5L797 1026.4M359.2 1030.7L370.4 1035.7M808.2 1030.7L797 1035.7M363.9 1020.3L370.4 1041.3M803.5 1020.3L797 1041.3M364.4 1020.3L359.2 1041.3M803 1020.3L808.2 1041.3M365.2 1020.3L370.4 1041.3M802.2 1020.3L797 1041.3M359.2 1043L370.4 1042.3M808.2 1043L797 1042.3M359.2 1046.3L370.4 1051.7M808.2 1046.3L797 1051.7M359.2 1051.1L370.4 1048M808.2 1051.1L797 1048M359.2 1050.7L370.4 1051.7M808.2 1050.7L797 1051.7M359.2 1044.8L370.4 1043.9M808.2 1044.8L797 1043.9M359.2 1043.5L370.4 1051.2M808.2 1043.5L797 1051.2M359.2 1048.5L370.4 1051.7M808.2 1048.5L797 1051.7M359.2 1049.7L370.4 1051.7M808.2 1049.7L797 1051.7M359.2 1049.2L370.4 1050.8M808.2 1049.2L797 1050.8M360.4 1041.3L362.6 1052.7M807 1041.3L804.8 1052.7M359.3 1041.3L359.2 1052.7M808.1 1041.3L808.2 1052.7M367.9 1041.3L359.2 1052.7M799.5 1041.3L808.2 1052.7M487.5 983.7L498.4 982.2M679.9 983.7L669 982.2M487.5 995.9L498.4 988.2M679.9 995.9L669 988.2M487.5 982.6L498.4 990.8M679.9 982.6L669 990.8M487.5 984.1L498.4 992.4M679.9 984.1L669 992.4M487.5 992.7L498.4 997.8M679.9 992.7L669 997.8M487.5 997L498.4 997.8M679.9 997L669 997.8M487.5 994.6L498.4 983.5M679.9 994.6L669 983.5M487.5 1015L498.4 1015.3M679.9 1015L669 1015.3M487.5 1013.9L498.4 1004.5M679.9 1013.9L669 1004.5M487.5 1014.6L498.4 1019.6M679.9 1014.6L669 1019.6M487.5 1001L498.4 999.8M679.9 1001L669 999.8M487.5 1010.9L498.4 1018.8M679.9 1010.9L669 1018.8M487.5 1004.6L498.4 999.8M679.9 1004.6L669 999.8M487.5 1004.7L498.4 1007.5M679.9 1004.7L669 1007.5M487.5 1035.7L498.4 1033.1M679.9 1035.7L669 1033.1M487.5 1028.5L498.4 1026M679.9 1028.5L669 1026M487.5 1028.2L498.4 1026.2M679.9 1028.2L669 1026.2M487.5 1039.8L498.4 1037.7M679.9 1039.8L669 1037.7M487.5 1035.6L498.4 1027.4M679.9 1035.6L669 1027.4M487.5 1034.5L498.4 1040.3M679.9 1034.5L669 1040.3M557.4 1052.7L557.7 1062M610 1052.7L609.7 1062M542 1052.7L545 1062M625.4 1052.7L622.4 1062M575.4 1052.7L568.2 1062M592 1052.7L599.2 1062M510.7 1052.7L515.8 1062M656.7 1052.7L651.6 1062M577 1052.7L577.3 1062M590.4 1052.7L590.1 1062M538.8 1052.7L543.2 1062M628.6 1052.7L624.2 1062M518 1052.7L513.3 1062M649.4 1052.7L654.1 1062M519.1 1052.7L520.8 1062M648.3 1052.7L646.6 1062M528.4 1052.7L522.9 1062M639 1052.7L644.5 1062M558.8 1052.7L568.1 1062M608.6 1052.7L599.3 1062M526.9 1052.7L531.1 1062M640.5 1052.7L636.3 1062M536.3 1052.7L543.6 1062M631.1 1052.7L623.8 1062M550.2 1052.7L545.4 1062M617.2 1052.7L622 1062M520.6 1052.7L510.8 1062M646.8 1052.7L656.6 1062M541.7 1052.7L539.3 1062M625.7 1052.7L628.1 1062M516.9 1052.7L514 1062M650.5 1052.7L653.4 1062M529 1052.7L534.6 1062M638.4 1052.7L632.8 1062M514.6 1052.7L524.6 1062M652.8 1052.7L642.8 1062M541.7 1052.7L543.7 1062M625.7 1052.7L623.7 1062M540.8 1052.7L547.6 1062M626.6 1052.7L619.8 1062M569.3 1052.7L570.5 1062M598.1 1052.7L596.9 1062M541.8 1052.7L546.4 1062M625.6 1052.7L621 1062M572.1 1052.7L570.1 1062M595.3 1052.7L597.3 1062M562.2 1052.7L571.6 1062M605.2 1052.7L595.8 1062M540.7 1052.7L535.2 1062M626.7 1052.7L632.2 1062M521.9 1052.7L526.4 1062M645.5 1052.7L641 1062M434.4 1073.3L445.7 1084.5M733 1073.3L721.7 1084.5M449.6 1073.3L443.2 1084.5M717.8 1073.3L724.2 1084.5M393.1 1073.3L387.2 1084.5M774.3 1073.3L780.2 1084.5M392.9 1073.3L398 1084.5M774.5 1073.3L769.4 1084.5M450 1073.3L459.8 1084.5M717.4 1073.3L707.6 1084.5M398.7 1073.3L407.7 1084.5M768.7 1073.3L759.7 1084.5M403.6 1073.3L401.8 1084.5M763.8 1073.3L765.6 1084.5M439 1073.3L428.8 1084.5M728.4 1073.3L738.6 1084.5M384.9 1073.3L393.1 1084.5M782.5 1073.3L774.3 1084.5M401.8 1073.3L398.3 1084.5M765.6 1073.3L769.1 1084.5M426.3 1073.3L430.7 1084.5M741.1 1073.3L736.7 1084.5M377.6 1073.3L377 1084.5M789.8 1073.3L790.4 1084.5M414.1 1073.3L413.7 1084.5M753.3 1073.3L753.7 1084.5M394.9 1073.3L397 1084.5M772.5 1073.3L770.4 1084.5M458.2 1073.3L455.5 1084.5M709.2 1073.3L711.9 1084.5M423.3 1073.3L413.9 1084.5M744.1 1073.3L753.5 1084.5M400.4 1073.3L404.4 1084.5M767 1073.3L763 1084.5M386.6 1073.3L396.1 1084.5M780.8 1073.3L771.3 1084.5M454.2 1073.3L444.3 1084.5M713.2 1073.3L723.1 1084.5M457 1073.3L453.9 1084.5M710.4 1073.3L713.5 1084.5M442.7 1073.3L449 1084.5M724.7 1073.3L718.4 1084.5M402.1 1073.3L406.5 1084.5M765.3 1073.3L760.9 1084.5M432.6 1073.3L440.1 1084.5M734.8 1073.3L727.3 1084.5M399.6 1073.3L405.8 1084.5M767.8 1073.3L761.6 1084.5M458.7 1073.3L462 1084.5M708.7 1073.3L705.4 1084.5M422.6 1073.3L413 1084.5M744.8 1073.3L754.4 1084.5M419 1073.3L415.3 1084.5M748.4 1073.3L752.1 1084.5M438 1073.3L442.4 1084.5M729.4 1073.3L725 1084.5M425.1 1073.3L417.3 1084.5M742.3 1073.3L750.1 1084.5M431.9 1073.3L435.1 1084.5M735.5 1073.3L732.3 1084.5" fill="none" stroke="#fff" stroke-width="0.990"/></svg>
<div class="t" style="left:218.5px;top:110.7px;letter-spacing:0;font-size:12px;line-height:14px;transform-origin:0 0;transform:scaleX(0.8033);color:#fff">Front</div>
<div class="t" style="left:971.7px;top:110.7px;letter-spacing:0;font-size:12px;line-height:14px;transform-origin:0 0;transform:scaleX(0.8094);color:#fff">Left</div>
<div class="t" style="left:218.5px;top:624.6px;letter-spacing:0;font-size:12px;line-height:14px;transform-origin:0 0;transform:scaleX(0.9045);color:#fff">Top</div>
<div class="t" style="left:971.7px;top:624.6px;letter-spacing:0;font-size:12px;line-height:14px;transform-origin:0 0;transform:scaleX(0.8709);color:#fff">Perspective</div>
<div class="abs" style="left:895px;top:549px;width:32px;height:32px;background:#fff"></div>
<div class="abs" style="left:1648px;top:549px;width:32px;height:32px;background:#fff"></div>
<div class="abs" style="left:895px;top:1063px;width:32px;height:32px;background:#fff"></div>
<div class="abs" style="left:242px;top:615px;width:1px;height:512px;background:#fff"></div>
<div class="abs" style="left:882px;top:615px;width:1px;height:512px;background:#fff"></div>
<svg style="left:0;top:0" width="1920" height="1200" viewBox="0 0 1920 1200"><g clip-path="url(#pclip)"><defs>
<linearGradient id="slab" x1="0" y1="0" x2="1" y2="1"><stop offset="0" stop-color="#bdbdbd"/><stop offset=".45" stop-color="#c9c9c9"/><stop offset="1" stop-color="#b4b4b4"/></linearGradient>
<linearGradient id="lf" x1="0" y1="0" x2="0" y2="1"><stop offset="0" stop-color="#b6b6b6"/><stop offset=".5" stop-color="#b9b9b9"/><stop offset="1" stop-color="#ababab"/></linearGradient>
<linearGradient id="ff" x1="0" y1="0" x2="1" y2="0"><stop offset="0" stop-color="#d9d9d9"/><stop offset="1" stop-color="#cbcbcb"/></linearGradient>
<linearGradient id="rf" x1="0" y1="0" x2="1" y2="0"><stop offset="0" stop-color="#d4d4d4"/><stop offset="1" stop-color="#c6c6c6"/></linearGradient>
<linearGradient id="win" x1="0" y1="0" x2="1" y2="0"><stop offset="0" stop-color="#c8c8c8"/><stop offset=".5" stop-color="#f4f4f4"/><stop offset="1" stop-color="#e4e4e4"/></linearGradient>
<linearGradient id="spire" x1="0" y1="0" x2="1" y2="0"><stop offset="0" stop-color="#c4c4c4"/><stop offset=".45" stop-color="#fafafa"/><stop offset="1" stop-color="#b8b8b8"/></linearGradient>
<linearGradient id="rim" x1="0" y1="0" x2="1" y2="0"><stop offset="0" stop-color="#e8e8e8"/><stop offset=".5" stop-color="#bcbcbc"/><stop offset="1" stop-color="#e0e0e0"/></linearGradient>
<clipPath id="pclip"><rect x="961" y="615" width="751" height="512"/></clipPath>
</defs><polygon points="1107.0,945.0 1178.0,925.0 1480.0,930.0 1531.5,957.0 1276.0,1127.0 1238.0,1127.0" fill="url(#slab)" /><polygon points="1107.0,945.0 1107.0,951.0 1232.0,1127.0 1238.0,1127.0" fill="#858585" /><polygon points="1531.5,957.0 1531.5,965.0 1297.0,1127.0 1276.0,1127.0" fill="#9a9a9a" /><polygon points="1226.3,651.7 1243.0,648.3 1243.0,646.7 1261.7,646.7 1261.7,642.5 1270.8,640.0 1277.5,639.0 1284.0,815.0 1300.0,1046.0 1222.0,985.0 1213.0,905.0 1215.0,798.0 1233.0,774.0" fill="url(#lf)" /><polygon points="1234.2,650.0 1243.8,648.5 1244.0,666.5 1235.0,668.3" fill="#e0e0e0" /><polygon points="1252.0,647.0 1261.7,647.0 1262.0,662.5 1253.0,664.0" fill="#e0e0e0" /><polygon points="1229.5,651.7 1236.5,633.0 1243.2,648.5 1243.2,651.0" fill="url(#spire2)" /><polygon points="1277.0,639.0 1290.4,639.0 1296.0,815.0 1312.0,1046.0 1300.0,1046.0 1284.0,815.0" fill="#dadada" /><polygon points="1285.8,639.0 1290.4,639.0 1296.0,815.0 1312.0,1046.0 1308.0,1046.0 1292.0,815.0" fill="#b2b2b2" /><polygon points="1270.8,640.5 1279.2,621.2 1287.5,639.5" fill="url(#spire2)" /><polygon points="1290.4,639.2 1307.0,639.2 1307.0,651.7 1310.0,651.7 1310.0,644.2 1335.8,644.2 1335.8,655.8 1338.3,655.8 1338.3,648.3 1362.9,648.3 1361.0,752.0 1358.0,870.0 1352.0,960.0 1348.0,1021.6 1312.0,1046.0 1296.0,815.0" fill="url(#ff)" /><polygon points="1310.0,644.2 1321.7,644.2 1321.7,663.0 1310.0,663.0" fill="#b2b2b2" /><polygon points="1338.3,648.3 1349.6,648.3 1349.6,665.8 1338.3,665.8" fill="#bcbcbc" /><polygon points="1307.0,651.7 1310.0,651.7 1310.0,663.0 1307.0,660.0" fill="#e4e4e4" /><polygon points="1361.0,751.7 1400.8,753.3 1358.0,818.0 1360.0,790.0" fill="#ababab" /><polygon points="1400.8,753.3 1440.0,806.0 1436.0,900.0 1356.0,930.0 1358.0,818.0" fill="#c6c6c6" /><defs><linearGradient id="rtr" x1="0" y1="0" x2="0" y2="1"><stop offset="0" stop-color="#b2b2b2"/><stop offset="1" stop-color="#c4c4c4"/></linearGradient><linearGradient id="spire2" x1="0" y1="0" x2="1" y2="0"><stop offset="0" stop-color="#b0b0b0"/><stop offset=".45" stop-color="#dedede"/><stop offset="1" stop-color="#a6a6a6"/></linearGradient></defs><polygon points="1392.0,671.0 1407.0,670.0 1407.0,671.7 1412.0,671.7 1412.0,668.0 1430.0,668.0 1430.0,674.0 1433.0,674.0 1433.0,665.2 1443.5,665.2 1436.0,815.0 1432.0,964.8 1348.0,1021.6 1356.0,930.0 1390.0,760.0" fill="#d2d2d2" /><polygon points="1443.5,665.2 1451.8,665.2 1443.0,815.0 1438.0,961.0 1432.0,964.8 1436.0,815.0" fill="#b0b0b0" /><polygon points="1451.8,665.2 1463.5,665.2 1454.0,815.0 1446.0,955.5 1438.0,961.0 1443.0,815.0" fill="#dddddd" /><polygon points="1463.5,665.2 1472.0,665.2 1472.0,667.4 1486.5,667.4 1501.0,669.2 1489.0,790.0 1473.0,937.0 1446.0,955.5 1454.0,815.0" fill="url(#rtr)" /><polygon points="1395.7,671.0 1401.7,658.2 1407.0,670.0" fill="url(#spire2)" /><polygon points="1486.5,669.0 1491.2,658.2 1496.0,669.5" fill="url(#spire2)" /><polygon points="1471.2,667.4 1479.6,667.4 1479.2,680.5 1470.8,680.0" fill="#dedede" /><polygon points="1486.0,669.0 1493.8,669.2 1493.4,682.7 1485.6,682.2" fill="#e2e2e2" /><polygon points="1401.0,671.0 1410.0,671.7 1410.0,682.5 1401.0,682.5" fill="#c0c0c0" /><polygon points="1421.6,668.0 1430.0,668.0 1430.0,682.0 1421.6,682.0" fill="#bcbcbc" /><defs><linearGradient id="rimL" x1="0" y1="0" x2="1" y2="1"><stop offset="0" stop-color="#f2f2f2"/><stop offset=".45" stop-color="#dcdcdc"/><stop offset="1" stop-color="#9c9c9c"/></linearGradient><linearGradient id="rimR" x1="1" y1="0" x2="0" y2="1"><stop offset="0" stop-color="#f2f2f2"/><stop offset=".45" stop-color="#dcdcdc"/><stop offset="1" stop-color="#a4a4a4"/></linearGradient></defs><ellipse cx="1257.3" cy="731.0" rx="17.7" ry="36.0" fill="url(#rimL)" transform="rotate(-3 1257.3 731.0)" /><clipPath id="cw1"><ellipse cx="1257.300" cy="731" rx="17.700" ry="36" transform="rotate(-3 1257.300 731)"/></clipPath><g clip-path="url(#cw1)"><ellipse cx="1266.0" cy="727.0" rx="15.5" ry="31.5" fill="#000" transform="rotate(-3 1266.0 727.0)" /><path d="M1250 745.500 L1280 745.500 L1280 775 L1258 775 Q1252 760 1250 745.500Z" fill="#a6a6a6" /></g><ellipse cx="1330.4" cy="731.0" rx="23.7" ry="36.7" fill="url(#rimL)" /><clipPath id="cw2"><ellipse cx="1330.400" cy="731" rx="23.700" ry="36.700"/></clipPath><g clip-path="url(#cw2)"><ellipse cx="1336.0" cy="731.5" rx="18.5" ry="33.0" fill="#b4b4b4" /><ellipse cx="1333.4" cy="725.5" rx="11.0" ry="25.5" fill="#000" /><path d="M1323 749 Q1333 753 1345 749 L1352 760 L1330 770 L1322 760Z" fill="#b8b8b8" /></g><ellipse cx="1415.8" cy="730.0" rx="16.8" ry="26.7" fill="url(#rimL)" transform="rotate(-2 1415.8 730.0)" /><ellipse cx="1419.5" cy="729.5" rx="12.7" ry="23.8" fill="#000" /><ellipse cx="1477.5" cy="730.0" rx="15.0" ry="26.8" fill="url(#rimR)" transform="rotate(4 1477.5 730.0)" /><ellipse cx="1473.5" cy="730.0" rx="10.5" ry="23.4" fill="#000" transform="rotate(3 1473.5 730.0)" /><path d="M1249.0 872.0 L1249.0 810.0 A13.2 15.2 0 0 1 1275.5 810.0 L1275.5 872.0Z" fill="#e0e0e0" /><polygon points="1258.0,860.0 1275.5,856.0 1276.0,876.7 1252.0,866.0" fill="#8f8f8f" /><polygon points="1249.0,826.0 1256.0,826.0 1256.0,832.0 1249.0,832.0" fill="#bdbdbd" /><polygon points="1270.0,822.0 1276.0,822.0 1276.0,828.0 1270.0,828.0" fill="#c8c8c8" /><path d="M1310.8 877.5 L1310.8 816.2 A18.8 21.6 0 0 1 1348.3 816.2 L1348.3 877.5Z" fill="#d2d2d2" /><polygon points="1330.0,800.0 1348.3,816.0 1348.3,870.0 1333.0,863.0 1330.0,856.0" fill="#dcdcdc" /><polygon points="1311.0,850.0 1330.0,856.0 1333.0,863.0 1348.0,868.0 1311.0,877.5" fill="#8c8c8c" /><polygon points="1311.0,826.0 1317.0,826.0 1317.0,832.0 1311.0,832.0" fill="#b4b4b4" /><polygon points="1342.0,822.0 1348.3,822.0 1348.3,828.0 1342.0,828.0" fill="#b4b4b4" /><path d="M1461.0 832.0 L1461.0 789.5 A10.5 12.1 0 0 1 1482.0 789.5 L1482.0 832.0Z" fill="#e4e4e4" /><path d="M1461 826 L1461 796 Q1463 783 1471 781 L1473 781 L1473 790 L1470 800 L1470 826Z" fill="#000" /><polygon points="1468.0,800.0 1476.0,800.0 1476.0,806.0 1468.0,806.0" fill="#e8e8e8" /><polygon points="1458.0,826.7 1476.0,833.0 1457.5,838.0" fill="#909090" /><path d="M1385.0 846.0 L1385.0 800.0 A15.0 17.2 0 0 1 1415.0 800.0 L1415.0 846.0Z" fill="#d6d6d6" /><path d="M1386 812 L1386 800 Q1390 788 1399 786.500 L1405 790 L1405 810Z" fill="#a2a2a2" /><path d="M1366.0 853.0 L1366.0 823.8 A5.8 6.6 0 0 1 1377.5 823.8 L1377.5 853.0Z" fill="#d8d8d8" /><path d="M1419.0 840.0 L1419.0 814.4 A6.4 7.3 0 0 1 1431.7 814.4 L1431.7 840.0Z" fill="#dadada" /><polygon points="1361.7,852.5 1378.0,849.5 1378.0,855.5 1361.7,859.0" fill="#8c8c8c" /><polygon points="1382.0,848.0 1413.0,843.0 1430.0,840.0 1430.0,845.0 1382.0,854.5" fill="#8c8c8c" /><path d="M1366.0 906.7 L1366.0 878.0 A5.0 5.8 0 0 1 1376.0 878.0 L1376.0 906.7Z" fill="url(#win)" /><path d="M1385.0 900.0 L1385.0 872.5 A4.5 5.2 0 0 1 1394.0 872.5 L1394.0 900.0Z" fill="url(#win)" /><path d="M1402.5 894.0 L1402.5 867.6 A4.6 5.3 0 0 1 1411.7 867.6 L1411.7 894.0Z" fill="url(#win)" /><path d="M1418.0 888.0 L1418.0 862.8 A4.8 5.5 0 0 1 1427.5 862.8 L1427.5 888.0Z" fill="url(#win)" /><path d="M1457.5 881.0 L1457.5 857.1 A4.6 5.3 0 0 1 1466.7 857.1 L1466.7 881.0Z" fill="url(#win)" /><path d="M1471.0 876.0 L1471.0 852.5 A4.5 5.2 0 0 1 1480.0 852.5 L1480.0 876.0Z" fill="url(#win)" /><path d="M1249.0 918.0 L1249.0 891.0 A6.0 6.9 0 0 1 1261.0 891.0 L1261.0 918.0Z" fill="url(#win)" /><path d="M1264.0 927.5 L1264.0 898.5 A6.0 6.9 0 0 1 1276.0 898.5 L1276.0 927.5Z" fill="url(#win)" /><path d="M1330.0 930.0 L1330.0 897.5 A7.5 8.6 0 0 1 1345.0 897.5 L1345.0 930.0Z" fill="url(#win)" /><path d="M1314.0 936.7 L1314.0 900.0 A5.0 5.8 0 0 1 1324.0 900.0 L1324.0 936.7Z" fill="#9c9c9c" /><polygon points="1318.0,900.0 1321.5,900.0 1321.5,934.0 1318.0,935.0" fill="#e6e6e6" /><polygon points="1361.0,908.0 1380.0,904.0 1380.0,908.0 1361.0,912.5" fill="#969696" /><polygon points="1383.0,902.5 1430.0,889.0 1430.0,893.0 1383.0,907.0" fill="#969696" /><polygon points="1456.0,883.0 1482.0,877.0 1482.0,881.0 1456.0,887.0" fill="#969696" /><clipPath id="cport"><path d="M1367 1008.800 L1366 970 L1374 938 Q1380 913 1400 911 Q1413 914 1416 930 L1417.500 974.600Z"/></clipPath><g clip-path="url(#cport)"><polygon points="1360.0,905.0 1420.0,905.0 1420.0,1010.0 1360.0,1010.0" fill="#d4d4d4" /><polygon points="1398.0,905.0 1420.0,905.0 1420.0,1010.0 1398.0,1010.0" fill="#dbdbdb" /><polygon points="1374.0,940.0 1408.0,945.0 1417.5,974.6 1367.0,1008.8 1364.0,970.0" fill="#b2b2b2" /><path d="M1374.0 941.0 L1420.0 948.0M1372.8 948.0 L1420.0 955.8M1371.6 955.0 L1420.0 963.6M1370.4 962.0 L1420.0 971.4M1369.2 969.0 L1420.0 979.2M1368.0 976.0 L1420.0 987.0M1366.8 983.0 L1420.0 994.8M1365.6 990.0 L1420.0 1002.6M1364.4 997.0 L1420.0 1010.4M1363.2 1004.0 L1420.0 1018.2M1376.0 940.0 L1362.0 1010.0M1381.0 940.7 L1370.0 1006.0M1386.0 941.4 L1378.0 1002.0M1391.0 942.1 L1386.0 998.0M1396.0 942.8 L1394.0 994.0M1401.0 943.5 L1402.0 990.0M1406.0 944.2 L1410.0 986.0M1411.0 944.9 L1418.0 982.0M1416.0 945.6 L1426.0 978.0" stroke="#6e6e6e" stroke-width="0.800" stroke-dasharray="1.500 1.500" fill="none"/></g><polygon points="1408.8,930.0 1417.5,934.0 1417.5,974.6 1408.8,979.0" fill="#e2e2e2" /><path d="M1374 938 Q1380 913 1400 911 Q1413 914 1416 930 L1413 931 Q1409 917 1400 915 Q1384 917 1378 940Z" fill="#b8b8b8" /><path d="M1338 1036 L1478 943" stroke="#777" stroke-width="0.900" stroke-dasharray="1.500 2" fill="none"/><path d="M1312.5 1022.5 L1312.5 972.2 A6.2 7.2 0 0 1 1325.0 972.2 L1325.0 1022.5Z" fill="url(#win)" /><path d="M1331.0 1011.0 L1331.0 964.2 A8.2 9.5 0 0 1 1347.5 964.2 L1347.5 1011.0Z" fill="url(#win)" /><path d="M1452.5 952.5 L1452.5 912.1 A4.6 5.3 0 0 1 1461.7 912.1 L1461.7 952.5Z" fill="url(#win)" /><path d="M1464.0 946.0 L1464.0 907.5 A5.0 5.8 0 0 1 1474.0 907.5 L1474.0 946.0Z" fill="url(#win)" /><polygon points="1178.0,906.0 1188.0,884.0 1200.0,880.0 1214.0,864.0 1224.0,990.0 1200.0,925.0" fill="#b1b1b1" /><path d="M1174 851 L1216 812 L1222 815 L1222 823 Q1196 830 1179 858Z" fill="#c9c9c9" /><path d="M1197 863 L1222 836 L1226 838 L1226 846 Q1210 852 1202 872Z" fill="#c6c6c6" /><path d="M1222 878 L1240 858 L1244 862 Q1232 872 1228 890Z" fill="#c2c2c2" /><polygon points="1165.0,852.0 1176.0,852.0 1180.0,945.0 1172.0,945.0" fill="#d9d9d9" /><polygon points="1165.0,852.0 1167.5,852.0 1174.0,945.0 1172.0,945.0" fill="#b0b0b0" /><polygon points="1187.0,863.0 1199.0,863.0 1201.0,965.0 1194.8,965.0" fill="#d6d6d6" /><polygon points="1187.0,863.0 1189.5,863.0 1197.0,965.0 1194.8,965.0" fill="#adadad" /><polygon points="1212.5,878.8 1226.0,878.8 1227.0,989.0 1218.8,989.0" fill="#d3d3d3" /><polygon points="1212.5,878.8 1215.0,878.8 1221.0,989.0 1218.8,989.0" fill="#ababab" /><path d="M1165.0 851.7 L1165.0 841 Q1166.65 835 1170.5 832 Q1174.35 835 1176.0 841 L1176.0 851.7Z" fill="url(#spire)" /><path d="M1187 863 L1187 852 Q1188.8 846 1193 843 Q1197.2 846 1199 852 L1199 863Z" fill="url(#spire)" /><path d="M1212.4 878.75 L1212.4 863.8 Q1214.44 857.8 1219.2 854.8 Q1223.96 857.8 1226.0 863.8 L1226.0 878.75Z" fill="url(#spire)" /><polygon points="1166.7,907.0 1198.0,923.5 1223.0,943.0 1290.0,985.0 1300.0,1046.0 1170.8,939.0" fill="#a6a6a6" /><polygon points="1166.7,907.0 1198.0,923.5 1223.0,943.0 1290.0,985.0 1290.0,990.0 1223.0,948.5 1198.0,929.0 1166.7,912.0" fill="#8f8f8f" /><polygon points="1169.8,908.0 1178.0,911.0 1179.0,945.0 1170.8,941.0" fill="#dadada" /><polygon points="1192.7,926.7 1200.0,929.7 1201.0,965.0 1193.7,961.0" fill="#dadada" /><polygon points="1217.7,945.4 1226.0,948.4 1227.0,989.0 1218.7,985.0" fill="#dadada" /><path d="M1178.5 937.0 L1178.5 918.2 A2.2 2.6 0 0 1 1183.0 918.2 L1183.0 937.0Z" fill="url(#win)" /><path d="M1184.5 945.0 L1184.5 923.5 A2.5 2.9 0 0 1 1189.6 923.5 L1189.6 945.0Z" fill="url(#win)" /><path d="M1200.5 956.0 L1200.5 937.2 A3.2 3.7 0 0 1 1207.0 937.2 L1207.0 956.0Z" fill="url(#win)" /><path d="M1209.0 964.0 L1209.0 944.2 A2.2 2.6 0 0 1 1213.5 944.2 L1213.5 964.0Z" fill="url(#win)" /><path d="M1226.5 978.8 L1226.5 956.7 A4.0 4.5 0 0 1 1234.4 956.7 L1234.4 978.8Z" fill="url(#win)" /><path d="M1237.5 990.0 L1237.5 968.2 A5.2 6.0 0 0 1 1248.0 968.2 L1248.0 990.0Z" fill="url(#win)" /><path d="M1251.0 1003.8 L1251.0 958.5 A7.9 9.0 0 0 1 1266.7 958.5 L1266.7 1003.8Z" fill="url(#win)" /><path d="M1269.8 1018.0 L1269.8 972.4 A8.4 9.6 0 0 1 1286.5 972.4 L1286.5 1018.0Z" fill="url(#win)" /><ellipse cx="1666.200" cy="1081.800" rx="40.500" ry="22" transform="rotate(22 1666.200 1081.800)" fill="none" stroke="#6060c6" stroke-width="10.500"/><ellipse cx="1666.200" cy="1083.800" rx="40.500" ry="22" transform="rotate(22 1666.200 1083.800)" fill="none" stroke="#5050b4" stroke-width="2" opacity=".5"/><polygon points="1646.5,1066.5 1656.0,1054.0 1689.0,1069.5 1680.0,1082.5" fill="#b9b9b9" /><polygon points="1646.5,1066.5 1680.0,1082.5 1675.0,1100.5 1642.0,1084.0" fill="#e6e6e6" /><polygon points="1680.0,1082.5 1689.0,1069.5 1678.0,1099.5 1675.0,1100.5" fill="#6c6c6c" /><path d="M1646.500 1066.500 L1680 1082.500" stroke="#555" stroke-width=".8"/></g></svg>
</body></html>
